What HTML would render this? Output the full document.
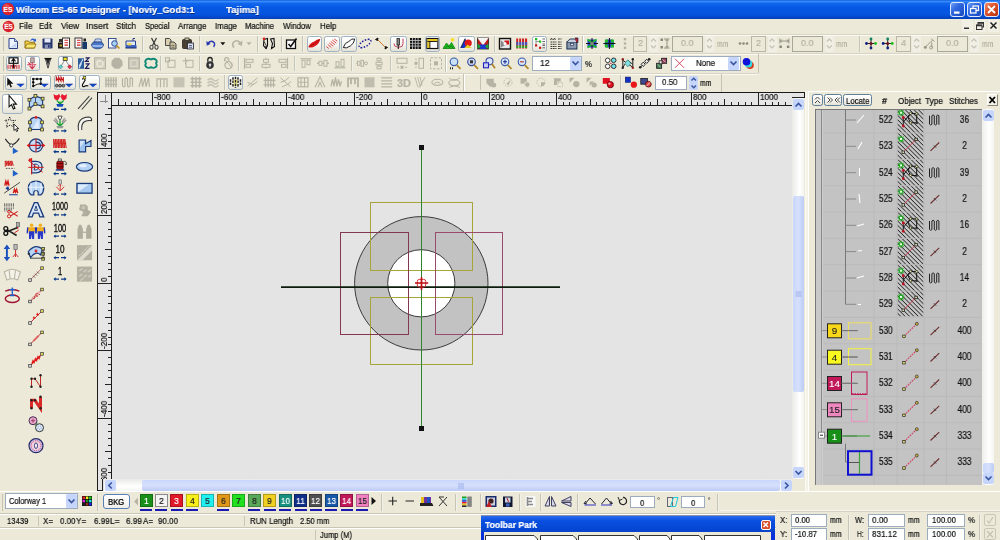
<!DOCTYPE html>
<html><head><meta charset="utf-8"><title>Wilcom ES-65 Designer</title>
<style>
html,body{margin:0;padding:0;background:#ECE9D8;}
#root{position:relative;width:1000px;height:540px;overflow:hidden;background:#ECE9D8;font-family:"Liberation Sans",sans-serif;}
#root div,#root span,#root svg{position:absolute;box-sizing:border-box;}
.t{white-space:pre;line-height:1;letter-spacing:0;will-change:transform;-webkit-text-stroke:0.22px currentColor;}
.btn{border:1px solid #9fb2c4;border-radius:2.5px;background:linear-gradient(#ffffff,#f4f3ee 60%,#e4e2d6);}
.fld{border:1px solid #9dacbc;background:#fff;}
.fldg{border:1px solid #c2c0b2;background:#ECE9D8;}
.sep{width:1px;background:#c5c2b2;border-right:1px solid #fff;width:2px;}
</style></head>
<body><div id="root">
<div class="" style="left:0px;top:0px;width:1000px;height:19px;background:linear-gradient(#0c5ce0 0%,#3a8cf8 7%,#1166ee 18%,#0558e4 40%,#0555df 75%,#0448c8 92%,#033fb4 100%);"></div>
<svg style="left:1px;top:2px" width="14" height="14" viewBox="0 0 14 14"><circle cx="7" cy="7" r="6.2" fill="#d8202a"/><circle cx="5.5" cy="5" r="3" fill="#f06a6a" opacity=".6"/><text x="7" y="9.6" font-size="7" font-weight="bold" text-anchor="middle" fill="#fff" font-family="Liberation Sans,sans-serif">ES</text></svg>
<span class="t" style="left:16px;top:4.9px;font-size:9.9px;color:#fff;letter-spacing:0;font-weight:bold;transform-origin:0 0;transform:scaleX(0.946);text-shadow:0.5px 0.5px 0 #0a2a80;">Wilcom ES-65 Designer - [Noviy_God3:1</span>
<span class="t" style="left:226px;top:4.9px;font-size:9.9px;color:#fff;letter-spacing:0;font-weight:bold;transform-origin:0 0;transform:scaleX(0.973);text-shadow:0.5px 0.5px 0 #0a2a80;">Tajima]</span>
<div class="" style="left:949.5px;top:1.5px;width:15px;height:15px;background:linear-gradient(135deg,#6a9cf4,#2f68e0 40%,#1f52c8 80%,#1a48b8);border:1px solid #dfe9fb;border-radius:3px;"></div>
<div class="" style="left:966.5px;top:1.5px;width:15px;height:15px;background:linear-gradient(135deg,#6a9cf4,#2f68e0 40%,#1f52c8 80%,#1a48b8);border:1px solid #dfe9fb;border-radius:3px;"></div>
<div class="" style="left:983.5px;top:1.5px;width:15px;height:15px;background:linear-gradient(135deg,#f09070,#e0562e 40%,#c43c18 80%,#b03010);border:1px solid #dfe9fb;border-radius:3px;"></div>
<svg style="left:949.5px;top:1.5px" width="50" height="15" viewBox="0 0 50 15"><rect x="4" y="9.500" width="5.500" height="2.200" fill="#fff"/><rect x="23" y="4" width="5.500" height="4.500" fill="none" stroke="#fff" stroke-width="1.200"/><rect x="20.500" y="6.500" width="5.500" height="4.500" fill="#2a62d8" stroke="#fff" stroke-width="1.200"/><path d="M38 4 L45 11 M45 4 L38 11" stroke="#fff" stroke-width="1.800"/></svg>
<div class="" style="left:0px;top:19px;width:1000px;height:15px;background:#ECE9D8;"></div>
<svg style="left:2px;top:20px" width="13" height="13" viewBox="0 0 14 14"><circle cx="7" cy="7" r="6.2" fill="#d8202a"/><circle cx="5.5" cy="5" r="3" fill="#f06a6a" opacity=".6"/><text x="7" y="9.6" font-size="7" font-weight="bold" text-anchor="middle" fill="#fff" font-family="Liberation Sans,sans-serif">ES</text></svg>
<span class="t" style="left:18.5px;top:21.2px;font-size:9.4px;color:#111;letter-spacing:0;transform-origin:0 0;transform:scaleX(0.891);">File</span>
<span class="t" style="left:39px;top:21.2px;font-size:9.4px;color:#111;letter-spacing:0;transform-origin:0 0;transform:scaleX(0.803);">Edit</span>
<span class="t" style="left:61px;top:21.2px;font-size:9.4px;color:#111;letter-spacing:0;transform-origin:0 0;transform:scaleX(0.891);">View</span>
<span class="t" style="left:86px;top:21.2px;font-size:9.4px;color:#111;letter-spacing:0;transform-origin:0 0;transform:scaleX(0.957);">Insert</span>
<span class="t" style="left:116px;top:21.2px;font-size:9.4px;color:#111;letter-spacing:0;transform-origin:0 0;transform:scaleX(0.851);">Stitch</span>
<span class="t" style="left:144.5px;top:21.2px;font-size:9.4px;color:#111;letter-spacing:0;transform-origin:0 0;transform:scaleX(0.795);">Special</span>
<span class="t" style="left:177.5px;top:21.2px;font-size:9.4px;color:#111;letter-spacing:0;transform-origin:0 0;transform:scaleX(0.852);">Arrange</span>
<span class="t" style="left:215px;top:21.2px;font-size:9.4px;color:#111;letter-spacing:0;transform-origin:0 0;transform:scaleX(0.842);">Image</span>
<span class="t" style="left:245px;top:21.2px;font-size:9.4px;color:#111;letter-spacing:0;transform-origin:0 0;transform:scaleX(0.816);">Machine</span>
<span class="t" style="left:283px;top:21.2px;font-size:9.4px;color:#111;letter-spacing:0;transform-origin:0 0;transform:scaleX(0.838);">Window</span>
<span class="t" style="left:319.5px;top:21.2px;font-size:9.4px;color:#111;letter-spacing:0;transform-origin:0 0;transform:scaleX(0.854);">Help</span>
<div class="" style="left:961.5px;top:20px;width:11px;height:12px;background:#f2f0e4;"></div>
<div class="" style="left:974.5px;top:20px;width:11px;height:12px;background:#f2f0e4;"></div>
<div class="" style="left:987.5px;top:20px;width:11px;height:12px;background:#f2f0e4;"></div>
<svg style="left:960px;top:20px" width="40" height="13" viewBox="0 0 40 13"><rect x="4" y="7.500" width="5" height="1.500" fill="#333"/><rect x="18" y="2.500" width="5.500" height="4.500" fill="none" stroke="#333" stroke-width="1"/><path d="M18 3 H23.500" stroke="#333" stroke-width="1.600"/><rect x="16.500" y="5" width="5.500" height="4.500" fill="#f2f0e4" stroke="#333" stroke-width="1"/><path d="M16.500 5.500 H22" stroke="#333" stroke-width="1.600"/><path d="M30.500 2.500 L36.500 8.500 M36.500 2.500 L30.500 8.500" stroke="#222" stroke-width="1.500"/></svg>
<div class="" style="left:0px;top:33.5px;width:1000px;height:1px;background:#d9d5c5;"></div>
<div class="" style="left:0px;top:34.5px;width:1000px;height:1px;background:#faf9f3;"></div>
<div class="" style="left:0px;top:53px;width:1000px;height:1px;background:#d9d5c5;"></div>
<div class="" style="left:0px;top:54px;width:1000px;height:1px;background:#faf9f3;"></div>
<div class="" style="left:0px;top:72.5px;width:758px;height:1px;background:#d9d5c5;"></div>
<div class="" style="left:0px;top:73.5px;width:758px;height:1px;background:#faf9f3;"></div>
<div class="" style="left:0px;top:91px;width:98px;height:1px;background:#d6d2c2;"></div>
<div class="" style="left:445px;top:55px;width:2px;height:17px;background:#c5c2b2;border-right:1px solid #fff;"></div>
<div class="" style="left:758px;top:54px;width:1px;height:19px;background:#c5c2b2;"></div>
<div class="" style="left:463px;top:74px;width:2px;height:17px;background:#c5c2b2;border-right:1px solid #fff;"></div>
<div class="" style="left:721px;top:74px;width:1px;height:18px;background:#c5c2b2;"></div>
<div class="" style="left:582px;top:36px;width:2px;height:16px;background:#c5c2b2;border-right:1px solid #fff;"></div>
<div class="" style="left:3px;top:36px;width:1px;height:15px;background:#c5c2b2;"></div>
<div class="" style="left:3px;top:56px;width:1px;height:15px;background:#c5c2b2;"></div>
<div class="" style="left:3px;top:75px;width:1px;height:15px;background:#c5c2b2;"></div>
<div class="" style="left:480px;top:75px;width:1px;height:15px;background:#c5c2b2;"></div>
<div class="btn" style="left:306.6px;top:36px;width:15.4px;height:16px;"></div>
<div class="btn" style="left:324px;top:36px;width:15.5px;height:16px;"></div>
<div class="btn" style="left:341px;top:36px;width:15.5px;height:16px;"></div>
<div class="btn" style="left:390.3px;top:36px;width:16.3px;height:16px;"></div>
<div class="btn" style="left:424.8px;top:36px;width:15.2px;height:16px;"></div>
<div class="btn" style="left:458px;top:36px;width:16.5px;height:16px;"></div>
<div class="btn" style="left:531.8px;top:36px;width:15.5px;height:16px;"></div>
<div class="btn" style="left:5.5px;top:55.5px;width:16.0px;height:15.5px;"></div>
<div class="btn" style="left:24.5px;top:55.5px;width:15.5px;height:15.5px;"></div>
<div class="btn" style="left:57.5px;top:55.5px;width:15.5px;height:15.5px;"></div>
<div class="btn" style="left:5px;top:74.5px;width:22px;height:15.5px;"></div>
<div class="btn" style="left:29.5px;top:74.5px;width:21.5px;height:15.5px;"></div>
<div class="btn" style="left:54px;top:74.5px;width:21.5px;height:15.5px;"></div>
<div class="btn" style="left:78.5px;top:74.5px;width:21.5px;height:15.5px;"></div>
<div class="btn" style="left:227.7px;top:74.5px;width:15.6px;height:15.5px;"></div>
<span class="t" style="left:396.5px;top:77.5px;font-size:10.5px;color:#b6b3a4;letter-spacing:0;font-weight:bold;transform-origin:0 0;transform:scaleX(1.043);">3D</span>
<div class="" style="left:142px;top:36px;width:2px;height:16px;background:#c8c5b5;border-right:1px solid rgba(255,255,255,.75);"></div>
<div class="" style="left:198.5px;top:36px;width:2px;height:16px;background:#c8c5b5;border-right:1px solid rgba(255,255,255,.75);"></div>
<div class="" style="left:257px;top:36px;width:2px;height:16px;background:#c8c5b5;border-right:1px solid rgba(255,255,255,.75);"></div>
<div class="" style="left:280.5px;top:36px;width:2px;height:16px;background:#c8c5b5;border-right:1px solid rgba(255,255,255,.75);"></div>
<div class="" style="left:302px;top:36px;width:2px;height:16px;background:#c8c5b5;border-right:1px solid rgba(255,255,255,.75);"></div>
<div class="" style="left:494px;top:36px;width:2px;height:16px;background:#c8c5b5;border-right:1px solid rgba(255,255,255,.75);"></div>
<div class="" style="left:859px;top:36px;width:2px;height:16px;background:#c8c5b5;border-right:1px solid rgba(255,255,255,.75);"></div>
<div class="" style="left:160.4px;top:56px;width:2px;height:15px;background:#c8c5b5;border-right:1px solid rgba(255,255,255,.75);"></div>
<div class="" style="left:199px;top:56px;width:2px;height:15px;background:#c8c5b5;border-right:1px solid rgba(255,255,255,.75);"></div>
<div class="" style="left:238px;top:56px;width:2px;height:15px;background:#c8c5b5;border-right:1px solid rgba(255,255,255,.75);"></div>
<div class="" style="left:294px;top:56px;width:2px;height:15px;background:#c8c5b5;border-right:1px solid rgba(255,255,255,.75);"></div>
<div class="" style="left:350.8px;top:56px;width:2px;height:15px;background:#c8c5b5;border-right:1px solid rgba(255,255,255,.75);"></div>
<div class="" style="left:390px;top:56px;width:2px;height:15px;background:#c8c5b5;border-right:1px solid rgba(255,255,255,.75);"></div>
<div class="" style="left:600px;top:56px;width:2px;height:15px;background:#c8c5b5;border-right:1px solid rgba(255,255,255,.75);"></div>
<div class="" style="left:224px;top:75px;width:2px;height:15px;background:#c8c5b5;border-right:1px solid rgba(255,255,255,.75);"></div>
<div class="" style="left:620px;top:75px;width:2px;height:15px;background:#c8c5b5;border-right:1px solid rgba(255,255,255,.75);"></div>
<div class="" style="left:633px;top:36px;width:14px;height:15.5px;border:1px solid #b9b6a6;background:#ECE9D8;"></div>
<div class="" style="left:751.3px;top:36px;width:14.5px;height:15.5px;border:1px solid #b9b6a6;background:#ECE9D8;"></div>
<div class="" style="left:896px;top:36px;width:14.7px;height:15.5px;border:1px solid #b9b6a6;background:#ECE9D8;"></div>
<div class="" style="left:672px;top:36px;width:30.6px;height:15.5px;border:1px solid #a9a798;background:#ECE9D8;"></div>
<div class="" style="left:792.2px;top:36px;width:30.6px;height:15.5px;border:1px solid #a9a798;background:#ECE9D8;"></div>
<div class="" style="left:937px;top:36px;width:30.8px;height:15.5px;border:1px solid #a9a798;background:#ECE9D8;"></div>
<div class="" style="left:649.0px;top:36px;width:9px;height:15.5px;background:#f1efe5;border-radius:1px;"></div>
<div class="" style="left:705.0px;top:36px;width:9px;height:15.5px;background:#f1efe5;border-radius:1px;"></div>
<div class="" style="left:767.5px;top:36px;width:9px;height:15.5px;background:#f1efe5;border-radius:1px;"></div>
<div class="" style="left:824.8px;top:36px;width:9px;height:15.5px;background:#f1efe5;border-radius:1px;"></div>
<div class="" style="left:912.2px;top:36px;width:9px;height:15.5px;background:#f1efe5;border-radius:1px;"></div>
<div class="" style="left:969.5px;top:36px;width:9px;height:15.5px;background:#f1efe5;border-radius:1px;"></div>
<span class="t" style="left:637.5px;top:38px;font-size:9.8px;color:#b4b1a2;letter-spacing:0;transform-origin:0 0;transform:scaleX(0.917);">2</span>
<span class="t" style="left:756.0px;top:38px;font-size:9.8px;color:#b4b1a2;letter-spacing:0;transform-origin:0 0;transform:scaleX(0.917);">2</span>
<span class="t" style="left:900.8px;top:38px;font-size:9.8px;color:#b4b1a2;letter-spacing:0;transform-origin:0 0;transform:scaleX(0.917);">4</span>
<span class="t" style="left:681.0px;top:38px;font-size:9.8px;color:#b4b1a2;letter-spacing:0;transform-origin:0 0;transform:scaleX(0.918);">0.0</span>
<span class="t" style="left:801.2px;top:38px;font-size:9.8px;color:#b4b1a2;letter-spacing:0;transform-origin:0 0;transform:scaleX(0.918);">0.0</span>
<span class="t" style="left:946.1px;top:38px;font-size:9.8px;color:#b4b1a2;letter-spacing:0;transform-origin:0 0;transform:scaleX(0.918);">0.0</span>
<span class="t" style="left:717px;top:39.2px;font-size:9.4px;color:#b4b1a2;letter-spacing:0;transform-origin:0 0;transform:scaleX(0.722);">mm</span>
<span class="t" style="left:836.4px;top:39.2px;font-size:9.4px;color:#b4b1a2;letter-spacing:0;transform-origin:0 0;transform:scaleX(0.722);">mm</span>
<span class="t" style="left:981.6px;top:39.2px;font-size:9.4px;color:#b4b1a2;letter-spacing:0;transform-origin:0 0;transform:scaleX(0.722);">mm</span>
<div class="fld" style="left:532px;top:56px;width:50px;height:14.5px;"></div>
<div class="" style="left:570px;top:57px;width:11px;height:12.5px;background:#c6d5fb;border-radius:1.5px;"></div>
<span class="t" style="left:540.2px;top:57.6px;font-size:9.8px;color:#111;letter-spacing:0;transform-origin:0 0;transform:scaleX(0.872);">12</span>
<span class="t" style="left:584.5px;top:58.5px;font-size:9.4px;color:#111;letter-spacing:0;transform-origin:0 0;transform:scaleX(0.837);">%</span>
<div class="fld" style="left:670.5px;top:56px;width:70px;height:14.5px;"></div>
<div class="" style="left:728px;top:57px;width:11px;height:12.5px;background:#c6d5fb;border-radius:1.5px;"></div>
<span class="t" style="left:696px;top:57.9px;font-size:9.8px;color:#111;letter-spacing:0;transform-origin:0 0;transform:scaleX(0.811);">None</span>
<svg style="left:0;top:0" width="1000" height="540" viewBox="0 0 1000 540" fill="none" stroke="#3a55a0" stroke-width="1.700"><path d="M572.500 61.500 L575.500 64.500 L578.500 61.500"/><path d="M730.500 61.500 L733.500 64.500 L736.500 61.500"/></svg>
<div class="fld" style="left:654.5px;top:75.5px;width:32.5px;height:14.5px;"></div>
<span class="t" style="left:661.6px;top:76.7px;font-size:9.8px;color:#111;letter-spacing:0;transform-origin:0 0;transform:scaleX(0.813);">0.50</span>
<div class="" style="left:688.5px;top:76px;width:9.5px;height:6.5px;background:#c6d5fb;border-radius:1.5px;"></div>
<div class="" style="left:688.5px;top:83px;width:9.5px;height:6.5px;background:#c6d5fb;border-radius:1.5px;"></div>
<svg style="left:688.5px;top:76px" width="9.5" height="14" viewBox="0 0 9.5 14" fill="none" stroke="#3a55a0" stroke-width="1.400"><path d="M2.500 4.500 L4.750 2.200 L7 4.500 M2.500 9.500 L4.750 11.800 L7 9.500"/></svg>
<span class="t" style="left:700px;top:77.8px;font-size:9.4px;color:#111;letter-spacing:0;transform-origin:0 0;transform:scaleX(0.734);">mm</span>
<svg style="left:0;top:0" width="1000" height="540" viewBox="0 0 1000 540" fill="none"><g transform="translate(13 43.5)"><path d="M-4 -5 H1.5 L4.5 -2 V5 H-4 Z" fill="#eef4ff" stroke="#2a3f8a" stroke-width="1"/><path d="M1.5 -5 V-2 H4.5" fill="#b8c8ee" stroke="#2a3f8a" stroke-width=".8"/><path d="M-3 4 L3.5 -1 V4Z" fill="#c4d4f4"/></g><g transform="translate(30.5 43.5)"><path d="M-5.5 -2.5 H-2 L-1 -1.2 H4 V4.5 H-5.5Z" fill="#f0d040" stroke="#8a6a10" stroke-width=".9"/><path d="M-5.5 4.5 L-3.5 0.5 H5.5 L4 4.5Z" fill="#fbe870" stroke="#8a6a10" stroke-width=".8"/><path d="M0 -3.5 q2.5 -2.5 4.5 -0.5 l1 -1 v3 h-3 l1 -1 q-1.5 -1.300 -3.500 0.500z" fill="#2a5ad0"/></g><g transform="translate(47.5 43.5)"><rect x="-5" y="-5" width="10" height="10" rx=".8" fill="#26346e"/><rect x="-3" y="-5" width="6" height="4" fill="#e8ecf8"/><rect x="-2.8" y="1" width="5.6" height="4" fill="#8a96b8"/><rect x="0.500" y="1.6" width="1.6" height="2.6" fill="#26346e"/></g><g transform="translate(64 43.5)"><rect x="-6" y="-1" width="6" height="6" fill="#1a1a1a"/><rect x="-5" y="-4.500" width="3" height="3" fill="#333"/><rect x="-1.500" y="-5.500" width="7" height="10" fill="#fff" stroke="#222" stroke-width=".9"/><path d="M0.500 -3.200 H4 M0.500 -0.800 H4 M0.500 1.600 H4" stroke="#d02020" stroke-width="1.100"/><rect x="-4.500" y="1" width="2.500" height="2" fill="#c8a030"/></g><g transform="translate(81 43.5)"><rect x="-6" y="-5.500" width="7" height="10" fill="#fff" stroke="#222" stroke-width=".9"/><path d="M-4 -3.200 H-0.500 M-4 -0.800 H-0.500 M-4 1.600 H-0.500" stroke="#d02020" stroke-width="1.100"/><rect x="1.500" y="-1.500" width="4.500" height="7" fill="#1a3a6a"/><rect x="2.500" y="-5" width="2.500" height="3" fill="#222"/></g><g transform="translate(97.5 43.5)"><ellipse cx="0" cy="1.500" rx="6" ry="3.800" fill="#4a78c8"/><path d="M-3.500 -1 L-2 -4.500 H3.500 L4 -1Z" fill="#e8f0ff" stroke="#2a4a9a" stroke-width=".8"/><path d="M-5.500 2.500 H5.500" stroke="#cfe0ff" stroke-width="1.200"/><ellipse cx="0" cy="1.500" rx="6" ry="3.800" fill="none" stroke="#24407e" stroke-width=".8"/></g><g transform="translate(114 43.5)"><rect x="-5.500" y="-5" width="7.500" height="9.500" fill="#f4f8ff" stroke="#2a3f8a" stroke-width=".9"/><circle cx="0.500" cy="0" r="2.800" fill="#a8d0f0" stroke="#2a4a9a" stroke-width="1"/><path d="M2.500 2.200 L5.500 5" stroke="#c09020" stroke-width="1.600"/></g><g transform="translate(131 43.5)"><path d="M-5.500 4.500 H5.500 V1.500 H-5.500Z" fill="#3a60c0"/><path d="M-5 1.500 V-2.500 H4.500 V1.500" fill="#dfe8fa" stroke="#2a3f8a" stroke-width="1"/><ellipse cx="-1.500" cy="0.800" rx="2.500" ry="1.200" fill="#f0d850"/><path d="M2 -2.500 V-5 H4" stroke="#2a3f8a" stroke-width="1" fill="none"/><path d="M-5.500 4.500 H5.500" stroke="#1a2a6a" stroke-width="1"/></g><g transform="translate(154 43.5)"><path d="M-2.500 -5.500 L1.500 2 M2.500 -5.500 L-1.500 2" stroke="#333" stroke-width="1.200"/><ellipse cx="-2.500" cy="3.800" rx="1.600" ry="2" fill="none" stroke="#444" stroke-width="1.100"/><ellipse cx="2.500" cy="3.800" rx="1.600" ry="2" fill="none" stroke="#444" stroke-width="1.100"/></g><g transform="translate(171 43.5)"><path d="M-5.500 -5 H-1.500 L0 -3.500 V2 H-5.500Z" fill="#d8cfae" stroke="#3a3a3a" stroke-width=".9"/><path d="M-1 -1.500 H3 L5 0.500 V5.500 H-1Z" fill="#c8be9c" stroke="#3a3a3a" stroke-width=".9"/><path d="M0.500 2 H3.500 M0.500 3.800 H3.500" stroke="#555" stroke-width=".7"/></g><g transform="translate(188 43.5)"><rect x="-5.500" y="-4" width="9" height="9" rx="1" fill="#4a4030" stroke="#222" stroke-width=".8"/><rect x="-3" y="-5.500" width="4" height="2.500" fill="#c8c0a0" stroke="#222" stroke-width=".7"/><rect x="-0.500" y="-0.500" width="6" height="6" fill="#d8e0f0" stroke="#223" stroke-width=".8"/><path d="M1 2 H4 M1 3.800 H4" stroke="#335" stroke-width=".7"/></g><g transform="translate(211 43.5)"><g transform="scale(.85)"><path d="M-3.500 -0.500 Q1 -5 4 -0.500 Q5 2 3 4" fill="none" stroke="#2a3ab0" stroke-width="1.800"/><path d="M-5.500 -3 L-5 2.500 L-0.500 0.500Z" fill="#2a3ab0"/></g></g><g transform="translate(222.8 43.5)"><path d="M-2.500 -1.200 H2.500 L0 1.800Z" fill="#111"/></g><g transform="translate(237 43.5)"><path d="M3.500 -0.500 Q-1 -5 -4 -0.500 Q-5 2 -3 4" fill="none" stroke="#b6b3a4" stroke-width="1.600"/><path d="M5.500 -3 L5 2.500 L0.500 0.500Z" fill="#b6b3a4"/></g><g transform="translate(249 43.5)"><path d="M-2.500 -1.200 H2.500 L0 1.800Z" fill="#b6b3a4"/></g><g transform="translate(269 43.5)"><path d="M-5 -4 L-1.500 -5 L-1.500 2 L-3 5 L-5.500 2Z M1.500 -4.500 L5 -5 L5.500 3 L2.500 5 L3.500 0Z" fill="none" stroke="#111" stroke-width="1.100"/><path d="M-5 -2 L-2 3.500 L-3.500 3 L-2.500 5.500" fill="#fff" stroke="#111" stroke-width=".8"/><circle cx="-5" cy="-4.800" r="1.300" fill="#e02020"/></g><g transform="translate(291.5 43.5)"><rect x="-5" y="-3.500" width="9" height="8.500" fill="#fff" stroke="#111" stroke-width="1.300"/><path d="M-3 0.500 L-0.800 3 L5 -5" fill="none" stroke="#111" stroke-width="1.600"/></g><g transform="translate(314.3 43.5)"><path d="M-6 3.500 Q-4 -1 0 -2 Q3 -5 6 -4.500 Q5 0.500 1 2.500 Q-3 5 -6 3.500Z" fill="#e01818"/><path d="M-5 3 Q0 1 5.500 -4" stroke="#a00808" stroke-width=".8" fill="none"/></g><g transform="translate(331.8 43.5)"><path d="M-5.500 3 l2.500 2 M-4 1 l3.500 3 M-2.500 -0.500 l4 3.200 M-1 -2 l4 3.200 M0.500 -3.500 l4 3.200 M2.500 -4.500 l3 2.200" stroke="#d84848" stroke-width="1"/></g><g transform="translate(348.8 43.5)"><path d="M-5.500 4 Q-4 -1 0 -2 Q3 -5.500 6 -4.500 Q5 0.500 1.500 2.500 Q-3 5.500 -5.500 4Z" fill="#fff" stroke="#222" stroke-width="1"/></g><g transform="translate(365 43.5)"><ellipse cx="0" cy="0" rx="6.500" ry="3" transform="rotate(-30)" fill="none" stroke="#1a1aa0" stroke-width="1.500" stroke-dasharray="1.500 1.500"/></g><g transform="translate(381.5 43.5)"><path d="M-4.500 -4.500 L4.500 4.500" stroke="#c87830" stroke-width="1"/><path d="M-6 -4 L-3.500 -5.500 L-4 -3Z M6 4 L3.500 5.500 L4 3Z" fill="#111" stroke="#111" stroke-width="1"/></g><g transform="translate(398.5 43.5)"><path d="M-4.500 0 Q-4.500 3.500 -1 3.500 H1.500 Q4.500 3.500 4.500 0 V-5" fill="none" stroke="#c03050" stroke-width=".9"/><rect x="-1.500" y="-5" width="2.500" height="6.500" fill="#888" stroke="#222" stroke-width=".8"/><path d="M-0.200 1.500 V5.500" stroke="#222" stroke-width="1.100"/></g><g transform="translate(415.5 43.5)"><rect x="-5.500" y="-5.500" width="11" height="11" fill="#111"/><path d="M-3 -5.500 V5.500 M-0.200 -5.500 V5.500 M2.600 -5.500 V5.500 M-5.500 -3 H5.500 M-5.500 -0.200 H5.500 M-5.500 2.600 H5.500" stroke="#b8b8b8" stroke-width=".9"/></g><g transform="translate(432.4 43.5)"><rect x="-5.500" y="-5" width="11" height="10" fill="#fff" stroke="#111" stroke-width="1.200"/><rect x="-5" y="-4.500" width="10" height="2.500" fill="#e8c820"/><rect x="-5" y="-2" width="2.500" height="6.500" fill="#e8c820"/><path d="M-2.500 -2 V4.500 M-5 -2 H5" stroke="#111" stroke-width=".9"/></g><g transform="translate(449 43.5)"><path d="M-6 5 L-2.500 -0.500 L0 2.500 L2.500 -1 L6 5Z" fill="#20c020" stroke="#108010" stroke-width=".8"/><path d="M-4 5 L-1.500 2 L0.500 4 L2.500 2 L4 5" fill="none" stroke="#0a700a" stroke-width=".8"/><circle cx="3.500" cy="-3.800" r="1.800" fill="#f8e020"/></g><g transform="translate(466.2 43.5)"><path d="M-5.500 4.500 L-1 -5 L3 4.500Z" fill="#1030d0"/><circle cx="2" cy="-0.500" r="3.600" fill="#e01818"/><path d="M-2 4.500 L1.500 1 L5.500 4.500Z" fill="#e8d020"/><path d="M-5.500 4.500 L-1 -5" stroke="#111" stroke-width=".8"/></g><g transform="translate(483 43.5)"><rect x="-5.500" y="-5.500" width="11" height="11" fill="#c01818" stroke="#222" stroke-width=".8"/><path d="M-5.500 -5.500 L0 2 L5.500 -5.500" fill="#f4f4f4"/><rect x="-3.500" y="1" width="7" height="4.500" fill="#1838d0"/><path d="M-5.500 0 L-2 3 L-5.500 5.500Z M5.500 0 L2 3 L5.500 5.500Z" fill="#18a838"/></g><g transform="translate(505 43.5)"><rect x="-5.500" y="-5" width="11" height="10.500" fill="#e8e8e8" stroke="#111" stroke-width="1.400"/><path d="M-4 -3 L1 1 L-4 4Z" fill="#888"/><rect x="-0.500" y="-3" width="4.500" height="4" fill="#d01818"/><circle cx="0" cy="0" r="1.500" fill="#fff"/></g><g transform="translate(521.7 43.5)"><g><rect x="-5.500" y="-5" width="2.200" height="10" fill="#d02020"/><rect x="-2.600" y="-5" width="2.200" height="10" fill="#d02020"/><rect x="0.300" y="-5" width="2.200" height="10" fill="#d02020"/><rect x="3.200" y="-5" width="2.200" height="10" fill="#d02020"/><rect x="-5.500" y="-1.500" width="11" height="3" fill="#3858d0" opacity=".85"/><rect x="-5.500" y="2" width="11" height="2.500" fill="#20b030" opacity=".85"/><path d="M-3 -5 V5 M-0.100 -5 V5 M2.800 -5 V5" stroke="#ECE9D8" stroke-width=".7"/></g></g><g transform="translate(539.5 43.5)"><rect x="-4.500" y="-5.500" width="2.200" height="2.200" fill="#18c018"/><rect x="-0.500" y="-3" width="2.200" height="2.200" fill="#18c018"/><rect x="-4.500" y="0.800" width="2.200" height="2.200" fill="#d01818"/><rect x="-0.500" y="3.200" width="2.200" height="2.200" fill="#d01818"/><path d="M3 -4.500 H5.500 M3 -2 H5.500 M3 0.500 H5.500 M3 2 H5.500 M3 4.300 H5.500" stroke="#555" stroke-width=".9"/><path d="M-3.500 -3 V1 M-3.400 -2 H-0.500" stroke="#555" stroke-width=".6"/></g><g transform="translate(556 43.5)"><path d="M-5.500 -3.500 l1 -2 l1 2 M-2.500 -3.500 l1 -2 l1 2 M-5.500 -1.500 H0.500 M-5.500 0.800 H0.500 M-5.500 3 H0.500 M-5.500 5 H0.500 M2 -4.500 H5.500 M2 -1.500 H5.500 M2 0.800 H5.500 M2 3 H5.500 M2 5 H5.500" stroke="#222" stroke-width=".9" fill="none" stroke-dasharray="1.800 .600"/></g><g transform="translate(572.4 43.5)"><rect x="-5.500" y="-1.500" width="10" height="7" fill="#8a98b0" stroke="#1a2a4a" stroke-width="1"/><path d="M-5.500 -1.500 L-2.500 -4.500 H3 L4.500 -1.500" fill="#c8d0e0" stroke="#1a2a4a" stroke-width=".9"/><rect x="-2" y="0" width="3" height="2" fill="#e8e8f0" stroke="#1a2a4a" stroke-width=".6"/><path d="M2.500 -5.500 H5.500 V-1 H4" fill="#c02020" stroke="#1a1a4a" stroke-width=".8"/></g><g transform="translate(592 43.5)"><rect x="-4.500" y="-4" width="9" height="8" fill="#2040c8"/><path d="M-4.500 -4 L0 -1 L4.500 -4 M-4.500 4 L0 1 L4.500 4" stroke="#20c020" stroke-width="1.600" fill="none"/><path d="M0 -5.500 V5.500 M-6 0 H6" stroke="#111" stroke-width="1"/><circle cx="0" cy="0" r="1.700" fill="#888"/></g><g transform="translate(609.4 43.5)"><rect x="-4.500" y="-4" width="9" height="8" rx="2" fill="#2040c8"/><rect x="-4.500" y="-4" width="3" height="3" fill="#20c020"/><rect x="1.500" y="1" width="3" height="3" fill="#20c020"/><rect x="1.500" y="-4" width="3" height="3" fill="#20c020"/><rect x="-4.500" y="1" width="3" height="3" fill="#20c020"/><path d="M0 -5.500 V5.500 M-6 0 H6" stroke="#111" stroke-width="1"/></g><g transform="translate(625 43.5)"><rect x="-1.200" y="-5.500" width="2.400" height="2.400" fill="#b6b3a4"/><rect x="-1.200" y="-1.200" width="2.400" height="2.400" fill="#b6b3a4"/><rect x="-1.200" y="3.100" width="2.400" height="2.400" fill="#b6b3a4"/></g><g transform="translate(653.5 43.5)"><path d="M-2.500 -2 L0 -4.500 L2.500 -2 M-2.500 2 L0 4.500 L2.500 2" fill="none" stroke="#c4c1b2" stroke-width="1.100"/></g><g transform="translate(665 43.5)"><rect x="-4.500" y="-5" width="2.500" height="2.500" fill="#8a887a"/><rect x="-4.500" y="2.500" width="2.500" height="2.500" fill="#8a887a"/><path d="M-1 -4.500 H4.500 M-1 4.500 H4.500 M2 -4 V4 M0.500 -2.500 L2 -4 L3.500 -2.500 M0.500 2.500 L2 4 L3.500 2.500" stroke="#8a887a" stroke-width=".9" fill="none"/></g><g transform="translate(709.5 43.5)"><path d="M-2.500 -2 L0 -4.500 L2.500 -2 M-2.500 2 L0 4.500 L2.500 2" fill="none" stroke="#c4c1b2" stroke-width="1.100"/></g><g transform="translate(743.5 43.5)"><circle cx="-3.500" cy="0" r="1.300" fill="#8a887a"/><circle cx="0" cy="0" r="1.300" fill="#8a887a"/><circle cx="3.500" cy="0" r="1.300" fill="#8a887a"/></g><g transform="translate(772 43.5)"><path d="M-2.500 -2 L0 -4.500 L2.500 -2 M-2.500 2 L0 4.500 L2.500 2" fill="none" stroke="#c4c1b2" stroke-width="1.100"/></g><g transform="translate(784.4 43.5)"><rect x="-5" y="2" width="2.500" height="2.500" fill="#8a887a"/><rect x="2.500" y="2" width="2.500" height="2.500" fill="#8a887a"/><path d="M-4.500 -5 V0 M4.500 -5 V0 M-4 -2.500 H4 M-2.500 -4 L-4 -2.500 L-2.500 -1 M2.500 -4 L4 -2.500 L2.500 -1" stroke="#8a887a" stroke-width=".9" fill="none"/></g><g transform="translate(829.3 43.5)"><path d="M-2.500 -2 L0 -4.500 L2.500 -2 M-2.500 2 L0 4.500 L2.500 2" fill="none" stroke="#c4c1b2" stroke-width="1.100"/></g><g transform="translate(871 43.5)"><path d="M-5.500 0 H5.500 M0 -5.500 V5.500" stroke="#111" stroke-width=".9"/><circle cx="-4.500" cy="0" r="1.400" fill="#102080"/><circle cx="4.500" cy="0" r="1.400" fill="#20c020"/><circle cx="0" cy="-4.500" r="1.400" fill="#108060"/><circle cx="0" cy="4.500" r="1.400" fill="#102080"/><circle cx="0" cy="0" r="1.500" fill="#701020"/></g><g transform="translate(887.7 43.5)"><path d="M-5.500 0 H5.500 M0 -5.500 V5.500" stroke="#111" stroke-width=".9"/><circle cx="-4.500" cy="0" r="1.400" fill="#102080"/><circle cx="4.500" cy="0" r="1.400" fill="#20c020"/><circle cx="0" cy="-4.500" r="1.400" fill="#108060"/><circle cx="0" cy="4.500" r="1.400" fill="#102080"/><circle cx="0" cy="0" r="1.500" fill="#701020"/></g><g transform="translate(916.7 43.5)"><path d="M-2.500 -2 L0 -4.500 L2.500 -2 M-2.500 2 L0 4.500 L2.500 2" fill="none" stroke="#c4c1b2" stroke-width="1.100"/></g><g transform="translate(929.3 43.5)"><path d="M-4.500 4 L3.500 -3.500 M2 -5 L5 -2 M2.500 -1 V4" stroke="#9a9888" stroke-width="1" fill="none"/><circle cx="-4" cy="3.800" r="1.500" fill="#9a9888"/><circle cx="1.800" cy="4" r="1.500" fill="none" stroke="#9a9888" stroke-width=".9"/></g><g transform="translate(974 43.5)"><path d="M-2.500 -2 L0 -4.500 L2.500 -2 M-2.500 2 L0 4.500 L2.500 2" fill="none" stroke="#c4c1b2" stroke-width="1.100"/></g><g transform="translate(13.5 63.3)"><rect x="-4.500" y="-5.500" width="9" height="5.500" fill="#fff" stroke="#111" stroke-width="1.200"/><path d="M0 -4 V4 M-2 -2 L0 -4.500 L2 -2 M-2 2 L0 4.500 L2 2" stroke="#111" stroke-width="1.200" fill="none"/><path d="M-5.500 1.500 V5.500 M-3.300 1.500 V5.500 M-1.100 1.500 V5.500 M1.100 1.500 V5.500 M3.300 1.500 V5.500 M5.500 1.500 V5.500" stroke="#d02030" stroke-width="1"/></g><g transform="translate(32.2 63.3)"><rect x="-1.500" y="-5.500" width="3.500" height="5" fill="#b8b0b0" stroke="#806060" stroke-width=".7"/><path d="M0 -1 V5 M-2.500 2.500 L0 5.500 L2.500 2.500 M-4 -1 L-1 1.500 M-5 1.500 H-1 M4 1.500 H1" stroke="#d03050" stroke-width="1.100" fill="none"/></g><g transform="translate(48 63.3)"><path d="M-3 -4.500 H3 L0.500 5 H-0.500Z" fill="#222"/><path d="M-1.800 -3 L0 3 L1.800 -3" stroke="#999" stroke-width=".7" fill="none"/><path d="M-3.500 -4.800 H3.500" stroke="#111" stroke-width="1.200"/></g><g transform="translate(65.2 63.3)"><path d="M0 -4 L-4.500 3.500 M0 -4 L4.500 3.500" stroke="#777" stroke-width=".8"/><rect x="-2" y="-6" width="4" height="3.200" fill="#e8e020" stroke="#333" stroke-width=".8"/><path d="M-4.500 1.500 L-2.500 3.500 L-4.500 5.500 L-6.500 3.500Z" fill="#60d0d0" stroke="#208080" stroke-width=".6"/><path d="M4.500 1.500 L6.500 3.500 L4.500 5.500 L2.500 3.500Z" fill="#e03050" stroke="#901020" stroke-width=".6"/></g><g transform="translate(84 63.3)"><rect x="-6" y="-5" width="6" height="10.500" fill="#2a5a98"/><path d="M-5 3 L-1 -4 M-5 5 L-2.500 0" stroke="#c8e0f8" stroke-width="1.200"/><path d="M1.500 -5.500 H5 L1.500 -2 H5 M1.500 0.500 H5 L1.500 5 H5.500" stroke="#1a1a60" stroke-width="1.200" fill="none"/></g><g transform="translate(100 63.3)"><rect x="-5.500" y="-5.500" width="11" height="11" fill="#d4d1c2" stroke="#b6b3a4" stroke-width="1"/><circle cx="0" cy="0.500" r="3" fill="none" stroke="#ECE9D8" stroke-width="1.400"/><path d="M5.500 -5.500 L2 -2" stroke="#b6b3a4"/></g><g transform="translate(117 63.3)"><path d="M-2.300 -5.500 H2.300 L5.500 -2.300 V2.300 L2.300 5.500 H-2.300 L-5.500 2.300 V-2.300Z" fill="#b6b3a4"/></g><g transform="translate(134 63.3)"><rect x="-5.500" y="-5.500" width="11" height="11" fill="#c8c5b6" stroke="#b6b3a4" stroke-width="1"/><rect x="-3" y="-3" width="6" height="6" fill="none" stroke="#dedbcc" stroke-width="1.200"/></g><g transform="translate(151 63.3)"><path d="M-5 -3.500 Q-2.500 -5.500 0 -3.800 Q2.500 -5.500 5 -3.500 Q6.500 -2 5 0 Q6.500 2 5 3.500 Q2.500 5.500 0 3.800 Q-2.500 5.500 -5 3.500 Q-6.500 2 -5 0 Q-6.500 -2 -5 -3.500Z" fill="none" stroke="#108878" stroke-width="1.800" stroke-linejoin="round"/></g><g transform="translate(171 63.3)"><rect x="-3" y="-3" width="7" height="7" fill="none" stroke="#b6b3a4" stroke-width="1"/><rect x="-5.500" y="-5.500" width="4" height="4" fill="none" stroke="#b6b3a4" stroke-width="1"/><path d="M5 -5 v0.100 M-5 5 v0.100 M5 5 v0.100" stroke="#b6b3a4" stroke-width="1.500"/></g><g transform="translate(188 63.3)"><rect x="-2" y="-3" width="7" height="7" fill="none" stroke="#b6b3a4" stroke-width="1"/><path d="M-5.500 -2.500 H1 M-2.500 -5.500 V1" stroke="#b6b3a4" stroke-width="1"/></g><g transform="translate(210 63.3)"><path d="M-2.200 -1.500 V-3.500 Q-2.200 -5.800 0 -5.800 Q2.200 -5.800 2.200 -3.500 V-1.500" fill="none" stroke="#222" stroke-width="1.300"/><circle cx="0" cy="1.800" r="3.800" fill="#333"/><circle cx="0" cy="1.500" r="1.300" fill="#ddd"/><path d="M0 2 V4" stroke="#ddd" stroke-width="1"/></g><g transform="translate(228 63.3)"><path d="M-3.500 -2 V-3.500 Q-3.500 -5.800 -1.300 -5.800 Q1 -5.800 1 -3.500" fill="none" stroke="#b6b3a4" stroke-width="1.200"/><circle cx="0.500" cy="1.800" r="3.600" fill="none" stroke="#b6b3a4" stroke-width="1.200"/><path d="M-3 -4 L4 5 M-1 -5 L5 3" stroke="#b6b3a4" stroke-width=".9"/></g><g transform="translate(455 63.3)"><circle cx="-1" cy="-1.500" r="3.800" fill="#c8e0f8" stroke="#3a5aa8" stroke-width="1.100"/><path d="M1.800 1.800 L5.500 5.500" stroke="#b08828" stroke-width="1.800"/><path d="M-4.500 4 V6 M-2.500 4 V6" stroke="#111" stroke-width=".9"/></g><g transform="translate(472.5 63.3)"><circle cx="-1" cy="-1.500" r="3.800" fill="#c8d8f0" stroke="#3a4a98" stroke-width="1.100"/><rect x="-2.500" y="-3" width="3" height="3" fill="#333"/><path d="M1.800 1.800 L5.500 5.500" stroke="#b08828" stroke-width="1.800"/></g><g transform="translate(489 63.3)"><circle cx="0.500" cy="-2" r="3.500" fill="#d8e4f8" stroke="#3a4a98" stroke-width="1.100"/><rect x="-5.500" y="-0.500" width="5" height="5" fill="#c8d0f0" stroke="#2020c0" stroke-width="1.100"/><path d="M3 0.800 L6 5" stroke="#b08828" stroke-width="1.800"/></g><g transform="translate(506 63.3)"><circle cx="-1" cy="-1.500" r="3.800" fill="#d8e8fa" stroke="#3a5aa8" stroke-width="1.100"/><path d="M-3 -1.500 H1 M-1 -3.500 V0.500" stroke="#1a2a90" stroke-width="1.100"/><path d="M1.800 1.800 L5.500 5.500" stroke="#b08828" stroke-width="1.800"/></g><g transform="translate(523 63.3)"><circle cx="-1" cy="-1.500" r="3.800" fill="#d8e8fa" stroke="#3a5aa8" stroke-width="1.100"/><path d="M-3 -1.500 H1" stroke="#b03030" stroke-width="1.100"/><path d="M1.800 1.800 L5.500 5.500" stroke="#b08828" stroke-width="1.800"/></g><g transform="translate(610.7 63.3)"><circle cx="-3" cy="-3" r="2.300" fill="#fff" stroke="#222" stroke-width=".9"/><circle cx="-3" cy="3" r="2.300" fill="#fff" stroke="#222" stroke-width=".9"/><circle cx="3" cy="-3" r="2.300" fill="#70e0e8" stroke="#222" stroke-width=".9"/><circle cx="3" cy="3" r="2.300" fill="#70e0e8" stroke="#222" stroke-width=".9"/><path d="M-1 0 H1" stroke="#c03060" stroke-width="1"/></g><g transform="translate(627.8 63.3)"><path d="M-5 -4 V4.500 M5 -4 V4.500 M-5 -3 L5 4 M-5 4 L0 -3 L5 1" stroke="#222" stroke-width="1" fill="none"/><path d="M0 -3.500 L3 0 L0 3.500 L-3 0Z" fill="#80e0e0" stroke="#208080" stroke-width=".6"/><circle cx="-5" cy="-4" r="1.200" fill="#902020"/><circle cx="5" cy="-4" r="1.200" fill="#222"/><circle cx="-5" cy="4.500" r="1.200" fill="#222"/><circle cx="5" cy="4.500" r="1.200" fill="#902020"/></g><g transform="translate(644.7 63.3)"><path d="M-4.500 4 L4.500 -4" stroke="#222" stroke-width="1"/><rect x="-3" y="-0.500" width="3" height="3" fill="#e8e8e8" stroke="#222" stroke-width=".9" transform="rotate(-45 -1.500 1)"/><rect x="0.500" y="-3.500" width="3" height="3" fill="#e8e8e8" stroke="#222" stroke-width=".9" transform="rotate(-45 2 -2)"/><circle cx="-4.500" cy="4" r="1.300" fill="#222"/><circle cx="4.500" cy="-4" r="1.300" fill="#222"/></g><g transform="translate(661.6 63.3)"><rect x="-5" y="0" width="5" height="5" fill="#408050" stroke="#222" stroke-width=".9"/><rect x="0" y="-5" width="5" height="5" fill="#a04060" stroke="#222" stroke-width=".9"/><path d="M-4 1 L-1 4 M1 -4 L4 -1" stroke="#ddd" stroke-width=".8"/><rect x="-2.500" y="-2.500" width="3" height="3" fill="#ddd" stroke="#222" stroke-width=".7"/></g><g transform="translate(679.5 63.3)"><path d="M-4.500 -4.500 L4.500 4.500 M4.500 -4.500 L-4.500 4.500" stroke="#c83858" stroke-width=".9"/></g><g transform="translate(748 63.3)"><circle cx="2" cy="2" r="3.800" fill="#e03818"/><circle cx="0.500" cy="0.500" r="3.800" fill="#30d8e0"/><circle cx="-1.500" cy="-1.500" r="3.800" fill="#1010d8"/></g><g transform="translate(249 63.3)"><path d="M-4.500 -5.500 V5.500" stroke="#b6b3a4" stroke-width="1.200"/><rect x="-3" y="-4" width="7" height="3" fill="none" stroke="#b6b3a4"/><rect x="-3" y="1" width="4.500" height="3" fill="none" stroke="#b6b3a4"/></g><g transform="translate(266 63.3)"><path d="M0 -5.500 V5.500" stroke="#b6b3a4" stroke-width="1.200"/><rect x="-2.500" y="-4" width="5" height="3" fill="#ECE9D8" stroke="#b6b3a4"/><rect x="-4" y="1" width="8" height="3" fill="#ECE9D8" stroke="#b6b3a4"/></g><g transform="translate(283 63.3)"><path d="M4.500 -5.500 V5.500" stroke="#b6b3a4" stroke-width="1.200"/><rect x="-4" y="-4" width="7" height="3" fill="none" stroke="#b6b3a4"/><rect x="-1.500" y="1" width="4.500" height="3" fill="none" stroke="#b6b3a4"/></g><g transform="translate(306 63.3)"><path d="M-5.500 -4.500 H5.500" stroke="#b6b3a4" stroke-width="1.200"/><rect x="-4" y="-3" width="3" height="7" fill="none" stroke="#b6b3a4"/><rect x="1" y="-3" width="3" height="4.500" fill="none" stroke="#b6b3a4"/></g><g transform="translate(323 63.3)"><path d="M-6 0 H6" stroke="#b6b3a4" stroke-width="1.200"/><rect x="-4" y="-2" width="3" height="4" fill="#ECE9D8" stroke="#b6b3a4"/><rect x="1" y="-3" width="3" height="6" fill="#ECE9D8" stroke="#b6b3a4"/></g><g transform="translate(340 63.3)"><path d="M-5.500 4.500 H5.500" stroke="#b6b3a4" stroke-width="1.200"/><rect x="-4" y="-1.500" width="3" height="4.500" fill="none" stroke="#b6b3a4"/><rect x="1" y="-4" width="3" height="7" fill="none" stroke="#b6b3a4"/></g><g transform="translate(362 63.3)"><path d="M-6 0 H6" stroke="#b6b3a4" stroke-width="1"/><rect x="-4.500" y="-2" width="2.500" height="4" fill="#ECE9D8" stroke="#b6b3a4"/><rect x="-1" y="-3" width="2.500" height="6" fill="#ECE9D8" stroke="#b6b3a4"/><circle cx="4" cy="0" r="1.500" fill="#ECE9D8" stroke="#b6b3a4"/></g><g transform="translate(379 63.3)"><path d="M0 -6 V6" stroke="#b6b3a4" stroke-width="1"/><rect x="-2" y="-5" width="4" height="2.500" fill="#ECE9D8" stroke="#b6b3a4"/><rect x="-3" y="-1" width="6" height="2.500" fill="#ECE9D8" stroke="#b6b3a4"/><rect x="-2" y="3" width="4" height="2.500" fill="#ECE9D8" stroke="#b6b3a4"/></g><g transform="translate(402 63.3)"><rect x="-5" y="-5" width="10" height="5" fill="none" stroke="#b6b3a4"/><rect x="-1.500" y="2.500" width="3" height="3" fill="#b6b3a4"/><path d="M-5 4 H-3 M3 4 H5" stroke="#b6b3a4"/></g><g transform="translate(419 63.3)"><rect x="0" y="-5" width="4.500" height="10" fill="none" stroke="#b6b3a4"/><rect x="-4.500" y="-1.500" width="3" height="3" fill="#b6b3a4"/><path d="M-3 -5 V-3 M-3 3 V5" stroke="#b6b3a4"/></g><g transform="translate(436 63.3)"><rect x="-5.500" y="-5.500" width="11" height="11" fill="none" stroke="#b6b3a4" stroke-dasharray="2.500 1.500"/><rect x="-2" y="-2" width="4" height="4" fill="#b6b3a4"/></g><g transform="translate(12 82.3) scale(0.95)"><path d="M-5 -5 L-5 4 L-3 2 L-1.500 5.500 L0 4.800 L-1.500 1.500 L1.500 1.500Z" fill="#111"/></g><g transform="translate(37.5 82.3) scale(0.95)"><path d="M-4.500 -3.500 H3.500 V1.500 L0 2 L-4.500 4 Z" fill="none" stroke="#111" stroke-width="1"/><g fill="#111"><circle cx="-4.500" cy="-3.500" r="1.300"/><circle cx="-0.500" cy="-3.500" r="1.300"/><circle cx="3.500" cy="-3.500" r="1.300"/><circle cx="3.500" cy="1.500" r="1.300"/><circle cx="-4.500" cy="4" r="1.300"/><circle cx="-4.500" cy="0" r="1.300"/></g></g><g transform="translate(61 82.3) scale(0.95)"><path d="M-5 -1 V-5.500 L-2.500 -1 V-5.500 L0 -1 V-5.500 L2.500 -1 V-5.500" fill="none" stroke="#c01818" stroke-width="1.100"/><path d="M-4 3.500 H2" stroke="#333" stroke-width="1"/><circle cx="-4.500" cy="3.500" r="1.500" fill="#888" stroke="#222" stroke-width=".8"/><circle cx="-1" cy="3.500" r="1.500" fill="#888" stroke="#222" stroke-width=".8"/><circle cx="2.500" cy="3.500" r="1.500" fill="#888" stroke="#222" stroke-width=".8"/></g><g transform="translate(85.5 82.3) scale(0.95)"><path d="M-3.500 -3 L-1.500 -5 L-0.500 -2 L-3 2 Q-4 5 -1.500 4.500 Q1 3 3 3.800" fill="none" stroke="#111" stroke-width="1.200"/><rect x="-2.500" y="-6" width="2.800" height="2.500" fill="#e8e020" stroke="#333" stroke-width=".6"/></g><g transform="translate(20.5 85.5) scale(0.85)"><path d="M-4.500 -1.800 H4.500 L0 2.200Z" fill="#1848c8"/><path d="M-4.500 -1.800 H4.500" stroke="#0a2a80" stroke-width=".6"/></g><g transform="translate(44.5 85.5) scale(0.85)"><path d="M-4.500 -1.800 H4.500 L0 2.200Z" fill="#1848c8"/><path d="M-4.500 -1.800 H4.500" stroke="#0a2a80" stroke-width=".6"/></g><g transform="translate(69 85.5) scale(0.85)"><path d="M-4.500 -1.800 H4.500 L0 2.200Z" fill="#1848c8"/><path d="M-4.500 -1.800 H4.500" stroke="#0a2a80" stroke-width=".6"/></g><g transform="translate(93 85.5) scale(0.85)"><path d="M-4.500 -1.800 H4.500 L0 2.200Z" fill="#1848c8"/><path d="M-4.500 -1.800 H4.500" stroke="#0a2a80" stroke-width=".6"/></g><g transform="translate(111 82.3)"><path d="M-5 -5 V5 M-2.500 -5 V5 M0 -5 V5 M2.500 -5 V5 M5 -5 V5" stroke="#b6b3a4" stroke-width="1.500"/><path d="M-6 -2 H6 M-6 2 H6" stroke="#b6b3a4" stroke-width="1"/></g><g transform="translate(128 82.3)"><path d="M-5.500 -4 V3.500 Q-4.300 5.500 -3 3.500 V-3.500 Q-1.800 -5.500 -0.500 -3.500 V3.500 Q0.800 5.500 2 3.500 V-3.500 Q3.200 -5.500 4.500 -3.500 V4.500" fill="none" stroke="#b6b3a4" stroke-width="1.200"/></g><g transform="translate(145 82.3)"><path d="M-6 4.500 L-3.500 -4.500 L-2.500 4.500 L0 -4.500 L1 4.500 L3.500 -4.500 L4.500 4.500" fill="none" stroke="#b6b3a4" stroke-width="1.200"/></g><g transform="translate(162 82.3)"><path d="M-5 5 V-3.500 H-1.500 V5 M-1.500 -3.500 H2 V5 M2 -3.500 H5 V5" fill="none" stroke="#b6b3a4" stroke-width="1.200"/></g><g transform="translate(179 82.3)"><rect x="-5.500" y="-5" width="11" height="10" fill="#c6c3b4"/></g><g transform="translate(196 82.3)"><path d="M-3.500 -5.500 V5.500 M0 -5.500 V5.500 M3.500 -5.500 V5.500 M-5.500 -3.500 H5.500 M-5.500 0 H5.500 M-5.500 3.500 H5.500" stroke="#b6b3a4" stroke-width="1.500"/></g><g transform="translate(213 82.3)"><path d="M-5.500 -2 Q-2.500 -5 0 -2.500 T5.500 -3 M-5.500 1 Q-2.500 -2 0 0.500 T5.500 0 M-5.500 4 Q-2.500 1 0 3.500 T5.500 3" fill="none" stroke="#c6c3b4" stroke-width="1.600"/></g><g transform="translate(253 82.3)"><path d="M-5.500 4 L4.500 -4.500 M-5.500 0 L0 2.500 L4.500 -1 M-3 5 L1 1" stroke="#b6b3a4" stroke-width="1" fill="none"/></g><g transform="translate(269.5 82.3)"><path d="M-4 -5 V5 M-1.300 -5 V5 M1.300 -5 V5 M4 -5 V5 M-6 -2 H6 M-6 2.500 H6" stroke="#b6b3a4" stroke-width="1.300"/></g><g transform="translate(286 82.3)"><path d="M-5.500 -4.500 L4.500 4.500 M-5.500 0 Q0 -1 3 -5 M-4 4.500 Q2 3 5 -1" stroke="#b6b3a4" stroke-width="1" fill="none"/></g><g transform="translate(303 82.3)"><rect x="-5" y="-4.500" width="10" height="9" fill="none" stroke="#b6b3a4" stroke-width="1.200"/><path d="M-2 -4.500 V4.500 M1.500 -4.500 V4.500 M-5 0 H5" stroke="#b6b3a4" stroke-width="1.100"/></g><g transform="translate(320 82.3)"><path d="M-5 5 L0 -5.500 L5 5 M-2 5 L0 0 L2 5" stroke="#b6b3a4" stroke-width="1.100" fill="none"/></g><g transform="translate(336.5 82.3)"><path d="M-5.500 4 L-4 -3 L-2.500 4 L-1 -5 L0.500 4 L2 -3 L3.500 4 L5 -1" stroke="#b6b3a4" stroke-width="1.300" fill="none"/></g><g transform="translate(353 82.3)"><path d="M-5 5 V-4 H5 V5 M-2 -4 V2 M2 -4 V2" stroke="#b6b3a4" stroke-width="1.800" fill="none"/></g><g transform="translate(369.5 82.3)"><rect x="-5" y="-5" width="10" height="10" fill="#c0bdae"/></g><g transform="translate(386.7 82.3)"><path d="M-5.500 -4.500 H5.500 M-5.500 -1.500 H5.500 M-5.500 1.500 H5.500 M-5.500 4.500 H5.500" stroke="#b6b3a4" stroke-width="1.200"/></g><g transform="translate(420 82.3)"><path d="M-5 -5 L-2 5 M-2.500 -5 L0 3 M0 -5 L2 3 M5 -5 L-1 5 M3 -2 L0 5" stroke="#b6b3a4" stroke-width=".9" fill="none"/></g><g transform="translate(437.4 82.3)"><ellipse cx="0" cy="0" rx="5.500" ry="3" fill="none" stroke="#b6b3a4" stroke-width="1.100"/><path d="M-3 1 Q0 -1.500 3 1" stroke="#b6b3a4" stroke-width="1" fill="none"/></g><g transform="translate(454.3 82.3)"><ellipse cx="0" cy="0.500" rx="5.500" ry="3" fill="none" stroke="#b6b3a4" stroke-width="1.100"/><path d="M-5 -4 Q0 0 5.500 -4.500 M-5 5 Q0 2 5.500 5" stroke="#b6b3a4" stroke-width="1" fill="none"/></g><g transform="translate(235.5 82.3)"><path d="M-5 -3 V3 M-2.500 -5 V5 M0 -5.500 V5.500 M2.500 -5 V5 M5 -3 V3" stroke="#222" stroke-width="1.500" stroke-dasharray="2.500 .800"/><path d="M-1.300 -3 V3 M1.300 -3 V3" stroke="#d8c820" stroke-width=".7"/></g><g transform="translate(491 82.3) scale(0.9)"><path d="M-5 -4 H3 V1 Q3 5 -1 5 L-5 1Z" fill="#b6b3a4"/><circle cx="3" cy="3" r="2.800" fill="#b6b3a4"/></g><g transform="translate(508 82.3) scale(0.9)"><circle cx="0" cy="0" r="4.500" fill="none" stroke="#b6b3a4" stroke-dasharray="1.500 1.500"/><path d="M-2 2 L3 -3 L1 3Z" fill="#b6b3a4"/></g><g transform="translate(525 82.3) scale(0.9)"><rect x="-5" y="-4.500" width="7" height="6" fill="#b6b3a4"/><circle cx="2.500" cy="2.500" r="3" fill="#b6b3a4" stroke="#ECE9D8" stroke-width="1"/></g><g transform="translate(541 82.3) scale(0.9)"><circle cx="0" cy="0" r="4.500" fill="none" stroke="#b6b3a4" stroke-dasharray="1.500 1.500"/><path d="M0 0 H4.500 A4.500 4.500 0 0 1 0 4.500Z" fill="#b6b3a4"/></g><g transform="translate(558 82.3) scale(0.9)"><path d="M-4.500 -4.500 H3 V-1 H-1 V3 H-4.500Z" fill="#b6b3a4"/><rect x="0" y="0" width="5" height="5" fill="none" stroke="#b6b3a4" stroke-dasharray="1.500 1.500"/></g><g transform="translate(574.5 82.3) scale(0.9)"><path d="M-5.500 -5 H0 L-5.500 0.500Z" fill="#b6b3a4"/><circle cx="2" cy="2" r="3.500" fill="#b6b3a4"/></g><g transform="translate(591.5 82.3) scale(0.9)"><path d="M-5.500 -5 H0 L-5.500 0.500Z" fill="#b6b3a4"/><path d="M-2 -1 H3 L-2 4Z" fill="#b6b3a4"/><circle cx="3" cy="3" r="2.800" fill="#b6b3a4"/></g><g transform="translate(608 82.3) scale(0.95)"><rect x="-5.500" y="-4.500" width="7.500" height="6" fill="#e01020"/><circle cx="2.500" cy="2.500" r="3.300" fill="#e01020" stroke="#500" stroke-width=".8"/><circle cx="1.500" cy="1.500" r="1.200" fill="#f8b0b0"/></g><g transform="translate(631 82.3) scale(0.95)"><rect x="-6" y="-5.500" width="5.500" height="5.500" fill="#1030c8" stroke="#081860" stroke-width=".6"/><circle cx="3" cy="2.500" r="3.300" fill="#e81818"/></g><g transform="translate(646 82.3) scale(0.95)"><rect x="-5.500" y="-4" width="7" height="6" fill="#404890" stroke="#111" stroke-width=".8"/><circle cx="2.500" cy="2" r="3" fill="#e04848" stroke="#400" stroke-width=".8"/><path d="M0.500 4 L4.500 0" stroke="#fff" stroke-width=".8"/></g></svg>
<div class="" style="left:98px;top:93px;width:706px;height:398px;background:#E4E4E4;"></div>
<div class="" style="left:98px;top:93px;width:694px;height:12px;background:#E6E6E6;"></div>
<div class="" style="left:98px;top:93px;width:13px;height:386px;background:#E6E6E6;"></div>
<svg style="left:0;top:0" width="1000" height="540" viewBox="0 0 1000 540" shape-rendering="crispEdges"><path d="M97.5 491 V92.5 H804.5 V98" fill="none" stroke="#1c1c1c" stroke-width="1"/><path d="M97 92.300 H805" stroke="#1c1c1c" stroke-width="1.300"/><path d="M792 97.5 H804.5" stroke="#222" stroke-width="1"/><path d="M110.5 105 H792" stroke="#1c1c1c" stroke-width="1"/><path d="M111 93 V479" stroke="#1c1c1c" stroke-width="1"/><path d="M97.5 490.5 H102.5 V479" stroke="#222" fill="none" stroke-width="1"/><path d="M118.3 99.3 V105 M125.0 101.5 V105 M131.8 101.5 V105 M138.5 101.5 V105 M145.3 101.5 V105 M152.0 93 V105 M158.7 101.5 V105 M165.5 101.5 V105 M172.2 101.5 V105 M179.0 101.5 V105 M185.7 99.3 V105 M192.4 101.5 V105 M199.2 101.5 V105 M205.9 101.5 V105 M212.7 101.5 V105 M219.4 93 V105 M226.1 101.5 V105 M232.9 101.5 V105 M239.6 101.5 V105 M246.4 101.5 V105 M253.1 99.3 V105 M259.8 101.5 V105 M266.6 101.5 V105 M273.3 101.5 V105 M280.1 101.5 V105 M286.8 93 V105 M293.5 101.5 V105 M300.3 101.5 V105 M307.0 101.5 V105 M313.8 101.5 V105 M320.5 99.3 V105 M327.2 101.5 V105 M334.0 101.5 V105 M340.7 101.5 V105 M347.5 101.5 V105 M354.2 93 V105 M360.9 101.5 V105 M367.7 101.5 V105 M374.4 101.5 V105 M381.2 101.5 V105 M387.9 99.3 V105 M394.6 101.5 V105 M401.4 101.5 V105 M408.1 101.5 V105 M414.9 101.5 V105 M421.6 93 V105 M428.3 101.5 V105 M435.1 101.5 V105 M441.8 101.5 V105 M448.6 101.5 V105 M455.3 99.3 V105 M462.0 101.5 V105 M468.8 101.5 V105 M475.5 101.5 V105 M482.3 101.5 V105 M489.0 93 V105 M495.7 101.5 V105 M502.5 101.5 V105 M509.2 101.5 V105 M516.0 101.5 V105 M522.7 99.3 V105 M529.4 101.5 V105 M536.2 101.5 V105 M542.9 101.5 V105 M549.7 101.5 V105 M556.4 93 V105 M563.1 101.5 V105 M569.9 101.5 V105 M576.6 101.5 V105 M583.4 101.5 V105 M590.1 99.3 V105 M596.8 101.5 V105 M603.6 101.5 V105 M610.3 101.5 V105 M617.1 101.5 V105 M623.8 93 V105 M630.5 101.5 V105 M637.3 101.5 V105 M644.0 101.5 V105 M650.8 101.5 V105 M657.5 99.3 V105 M664.2 101.5 V105 M671.0 101.5 V105 M677.7 101.5 V105 M684.5 101.5 V105 M691.2 93 V105 M697.9 101.5 V105 M704.7 101.5 V105 M711.4 101.5 V105 M718.2 101.5 V105 M724.9 99.3 V105 M731.6 101.5 V105 M738.4 101.5 V105 M745.1 101.5 V105 M751.9 101.5 V105 M758.6 93 V105 M765.3 101.5 V105 M772.1 101.5 V105 M778.8 101.5 V105 M785.6 101.5 V105" stroke="#222" stroke-width="1"/><path d="M107.5 108.1 H111 M105.3 114.8 H111 M107.5 121.5 H111 M107.5 128.3 H111 M107.5 135.0 H111 M107.5 141.8 H111 M98 148.5 H111 M107.5 155.2 H111 M107.5 162.0 H111 M107.5 168.7 H111 M107.5 175.5 H111 M105.3 182.2 H111 M107.5 188.9 H111 M107.5 195.7 H111 M107.5 202.4 H111 M107.5 209.2 H111 M98 215.9 H111 M107.5 222.6 H111 M107.5 229.4 H111 M107.5 236.1 H111 M107.5 242.9 H111 M105.3 249.6 H111 M107.5 256.3 H111 M107.5 263.1 H111 M107.5 269.8 H111 M107.5 276.6 H111 M98 283.3 H111 M107.5 290.0 H111 M107.5 296.8 H111 M107.5 303.5 H111 M107.5 310.3 H111 M105.3 317.0 H111 M107.5 323.7 H111 M107.5 330.5 H111 M107.5 337.2 H111 M107.5 344.0 H111 M98 350.7 H111 M107.5 357.4 H111 M107.5 364.2 H111 M107.5 370.9 H111 M107.5 377.7 H111 M105.3 384.4 H111 M107.5 391.1 H111 M107.5 397.9 H111 M107.5 404.6 H111 M107.5 411.4 H111 M98 418.1 H111 M107.5 424.8 H111 M107.5 431.6 H111 M107.5 438.3 H111 M107.5 445.1 H111 M105.3 451.8 H111 M107.5 458.5 H111 M107.5 465.3 H111 M107.5 472.0 H111" stroke="#222" stroke-width="1"/><path d="M100 101.5 H108 M105.5 95 V103" stroke="#888" stroke-width="1"/></svg>
<span class="t" style="left:153.5px;top:92px;font-size:9.5px;color:#111;letter-spacing:0;transform-origin:0 0;transform:scaleX(0.86);">-800</span>
<span class="t" style="left:220.9px;top:92px;font-size:9.5px;color:#111;letter-spacing:0;transform-origin:0 0;transform:scaleX(0.86);">-600</span>
<span class="t" style="left:288.3px;top:92px;font-size:9.5px;color:#111;letter-spacing:0;transform-origin:0 0;transform:scaleX(0.86);">-400</span>
<span class="t" style="left:355.7px;top:92px;font-size:9.5px;color:#111;letter-spacing:0;transform-origin:0 0;transform:scaleX(0.86);">-200</span>
<span class="t" style="left:423.1px;top:92px;font-size:9.5px;color:#111;letter-spacing:0;transform-origin:0 0;transform:scaleX(0.86);">0</span>
<span class="t" style="left:490.5px;top:92px;font-size:9.5px;color:#111;letter-spacing:0;transform-origin:0 0;transform:scaleX(0.86);">200</span>
<span class="t" style="left:557.9px;top:92px;font-size:9.5px;color:#111;letter-spacing:0;transform-origin:0 0;transform:scaleX(0.86);">400</span>
<span class="t" style="left:625.3px;top:92px;font-size:9.5px;color:#111;letter-spacing:0;transform-origin:0 0;transform:scaleX(0.86);">600</span>
<span class="t" style="left:692.7px;top:92px;font-size:9.5px;color:#111;letter-spacing:0;transform-origin:0 0;transform:scaleX(0.86);">800</span>
<span class="t" style="left:760.1px;top:92px;font-size:9.5px;color:#111;letter-spacing:0;transform-origin:0 0;transform:scaleX(0.86);">1000</span>
<div style="left:98px;top:106px;width:13px;height:373px;overflow:hidden;">
<span class="t" style="left:1px;top:41.0px;font-size:9.5px;color:#111;letter-spacing:0;transform-origin:0 0;transform:rotate(-90deg) scaleX(0.85);">400</span>
<span class="t" style="left:1px;top:108.4px;font-size:9.5px;color:#111;letter-spacing:0;transform-origin:0 0;transform:rotate(-90deg) scaleX(0.85);">200</span>
<span class="t" style="left:1px;top:175.8px;font-size:9.5px;color:#111;letter-spacing:0;transform-origin:0 0;transform:rotate(-90deg) scaleX(0.85);">0</span>
<span class="t" style="left:1px;top:243.2px;font-size:9.5px;color:#111;letter-spacing:0;transform-origin:0 0;transform:rotate(-90deg) scaleX(0.85);">-200</span>
<span class="t" style="left:1px;top:310.6px;font-size:9.5px;color:#111;letter-spacing:0;transform-origin:0 0;transform:rotate(-90deg) scaleX(0.85);">-400</span>
<span class="t" style="left:1px;top:378.0px;font-size:9.5px;color:#111;letter-spacing:0;transform-origin:0 0;transform:rotate(-90deg) scaleX(0.85);">-600</span>
</div>
<svg style="left:0;top:0" width="1000" height="540" viewBox="0 0 1000 540"><circle cx="421.3" cy="283.3" r="66.7" fill="#C2C2C2" stroke="#3a3a3a" stroke-width="1"/><circle cx="421.3" cy="283.3" r="33.6" fill="#fff" stroke="#3a3a3a" stroke-width="1"/><g fill="none" stroke-width="1" shape-rendering="crispEdges"><rect x="370.5" y="202.5" width="101.5" height="68" stroke="#a5a53a"/><rect x="370.5" y="297.5" width="101.5" height="66.5" stroke="#a5a53a"/><rect x="340.5" y="232.5" width="67.5" height="101.5" stroke="#843850"/><rect x="435.5" y="232.5" width="67" height="101.5" stroke="#9a4a6a"/><path d="M421.5 147 V428" stroke="#2f842f"/><path d="M281 287.100 H560" stroke="#0c1c0c" stroke-width="1.600" shape-rendering="geometricPrecision"/><rect x="418.5" y="144.5" width="5" height="5" fill="#111" stroke="none"/><rect x="418.5" y="425.5" width="5" height="5" fill="#111" stroke="none"/></g><g stroke="#c00c14" fill="none"><rect x="417.300" y="279.400" width="8.400" height="7.600" rx="2" stroke-width="1" stroke="#d83038"/><path d="M415 283 H428.200 M421.500 277.200 V289.700" stroke-width="1.700"/></g></svg>
<div class="" style="left:792px;top:98px;width:12px;height:381px;background:linear-gradient(90deg,#e9e9e6,#ffffff 60%,#f4f4f2);"></div>
<div class="" style="left:793px;top:99px;width:11px;height:11px;background:#c6d5fb;border-radius:2px;"></div>
<div class="" style="left:793px;top:467px;width:11px;height:11px;background:#c6d5fb;border-radius:2px;"></div>
<div class="" style="left:793px;top:196px;width:11px;height:196px;background:linear-gradient(90deg,#c9d7fc,#d6e0fd 50%,#bccbf5);border-radius:2px;"></div>
<div class="" style="left:104px;top:479px;width:688px;height:12px;background:linear-gradient(#e9e9e6,#ffffff 60%,#f4f4f2);"></div>
<div class="" style="left:105px;top:480px;width:11px;height:11px;background:#c6d5fb;border-radius:2px;"></div>
<div class="" style="left:781px;top:480px;width:11px;height:11px;background:#c6d5fb;border-radius:2px;"></div>
<div class="" style="left:142px;top:480px;width:638px;height:11px;background:linear-gradient(#c9d7fc,#d6e0fd 50%,#bccbf5);border-radius:2px;"></div>
<div class="" style="left:792px;top:479px;width:12px;height:12px;background:#ECE9D8;"></div>
<svg style="left:0;top:0" width="1000" height="540" viewBox="0 0 1000 540" fill="none" stroke="#3a55a0" stroke-width="1.6"><path d="M795.5 106.5 L798.5 103.5 L801.5 106.5"/><path d="M795.5 471 L798.5 474 L801.5 471"/><path d="M111.8 482.5 L108.8 485.5 L111.8 488.5"/><path d="M785 482.5 L788 485.5 L785 488.5"/><g stroke="#9db0e8" stroke-width="1"><path d="M795.5 292 H801.5 M795.5 294 H801.5 M795.5 296 H801.5"/><path d="M459 483 V489 M461 483 V489 M463 483 V489"/></g></svg>
<div class="btn" style="left:1.5px;top:93.5px;width:21.5px;height:20px;"></div>
<svg style="left:0;top:0" width="1000" height="540" viewBox="0 0 1000 540" fill="none"><g transform="translate(12.3 102.5) scale(1.08)"><path d="M-3 -6.500 V4 L-0.800 2 L1 6 L2.500 5.300 L0.800 1.500 L3.800 1.500Z" fill="#fff" stroke="#111" stroke-width="1"/></g><g transform="translate(12.3 124.0) scale(1.08)"><path d="M-2.500 -6.500 L-1 -3 L3 -3.500 L0.500 -0.800 L2 3 L-2 1 L-5.500 3 L-4.500 -1 L-7 -3.500 L-3.500 -3.500Z" fill="none" stroke="#222" stroke-width=".9" stroke-dasharray="1.500 1"/><path d="M1.500 0 V6 L3 4.800 L4 7 L5 6.500 L4 4.300 L6 4.300Z" fill="#fff" stroke="#111" stroke-width=".8"/></g><g transform="translate(12.3 145.4) scale(1.08)"><path d="M-6.500 -6 Q-3 -1 -1 -0.500 Q3 -1 6.500 -6.500" fill="none" stroke="#222" stroke-width="1"/><circle cx="-1" cy="0" r="1.500" fill="#fff" stroke="#222" stroke-width=".8"/><path d="M0.500 2 V8 L5.500 5.500Z" fill="#2060c8"/></g><g transform="translate(12.3 166.8) scale(1.08)"><path d="M-6.500 0 V-5.500 L-5 -1 V-5.500 L-3.500 -1 V-5.500 L-2 -1 V-5.500 L-0.500 -1 V-5.500 L1 -1" fill="none" stroke="#d02020" stroke-width=".9"/><path d="M-6 1.500 H2" stroke="#444" stroke-width=".8" stroke-dasharray="1.500 1"/><path d="M0.500 3 V9 L5.500 6.500Z" fill="#2060c8"/></g><g transform="translate(12.3 188.3) scale(1.08)"><path d="M-7 -2.500 L-6 -6.500 L-5 -3.500 L-4 -6.500 L-3 -2.500 M1 4.500 L2 1 L3 3.500 L4 1 L5 4.500" fill="none" stroke="#d01818" stroke-width="1.300"/><path d="M-7.500 4.500 L7 -5.500" stroke="#333" stroke-width=".8"/><path d="M-5.500 0 l2.500 0 M-3.500 -1.500 l-2 1.500 l2 1.500 M-3 6 H5" stroke="#1a3a9a" stroke-width="1.100" fill="none"/></g><g transform="translate(12.3 209.8) scale(1.08)"><path d="M-7 -6 V2 M-5 -6 V2 M-3 -6 V2 M-1 -6 V2 M1 -6 V-1" stroke="#555" stroke-width=".9" stroke-dasharray="3 .800"/><path d="M-2 1.500 L5 6 M-2 6 L5 1.500" stroke="#d02020" stroke-width="1"/><circle cx="-3" cy="6" r="1.500" fill="none" stroke="#d02020" stroke-width=".9"/><circle cx="-3" cy="1.800" r="1.300" fill="none" stroke="#d02020" stroke-width=".9"/></g><g transform="translate(12.3 231.2) scale(1.08)"><path d="M-5 0.500 L5 -3.500 M-5 -1.500 L4 4" stroke="#222" stroke-width="1.500"/><circle cx="-6" cy="2" r="1.800" fill="none" stroke="#111" stroke-width="1.200"/><circle cx="-6" cy="-2.500" r="1.800" fill="none" stroke="#111" stroke-width="1.200"/><path d="M2 1.500 L6 -1 M5 -7.500 V-2" stroke="#d02020" stroke-width=".9"/><rect x="4" y="-8" width="2.500" height="4" fill="#aaa" stroke="#555" stroke-width=".6"/></g><g transform="translate(12.3 252.7) scale(1.08)"><path d="M-5 -4.500 V5" stroke="#1a50c0" stroke-width="1.800"/><path d="M-8 -3.500 L-5 -7.500 L-2 -3.500Z M-8 4 L-5 8 L-2 4Z" fill="#1a50c0"/><path d="M3 -3 V4 M0.500 4 L3 1 L5.500 4" stroke="#d03030" stroke-width=".9" fill="none"/><rect x="1.500" y="-7.500" width="3" height="4.500" fill="#bbb" stroke="#555" stroke-width=".6"/></g><g transform="translate(12.3 274.1) scale(1.08)"><path d="M-7.500 -2 Q0 -7 7.500 -2 L5 5.500 Q0 3 -5 5.500Z M-3 -4 L-2 4 M3 -4 L2 4" fill="#f4f2e8" stroke="#b8b5a5" stroke-width="1"/></g><g transform="translate(12.3 295.5) scale(1.08)"><ellipse cx="0" cy="3" rx="6.500" ry="3.500" fill="none" stroke="#a01030" stroke-width="1.300"/><path d="M-6.500 -4 Q0 -7 6.500 -4" fill="none" stroke="#a01030" stroke-width="1.300"/><path d="M0 -7.500 V-1 M-2.500 -5.500 H2.500 M-2 0 H2" stroke="#1a60d0" stroke-width="1.200"/></g><g transform="translate(36 102.5) scale(1.1)"><path d="M-6 -2.500 L-0.500 -6 L6 -3.500 L6 3.500 L-0.500 1.500 L-6 5.500Z" fill="#b8d4f4" stroke="#1a3a7a" stroke-width="1"/><path d="M-0.500 -6 V1.500" stroke="#1a3a7a" stroke-width=".8"/><rect x="-7.3" y="-3.8" width="2.600" height="2.600" fill="#e8e060" stroke="#333" stroke-width=".7"/><rect x="-1.8" y="-7.3" width="2.600" height="2.600" fill="#e8e060" stroke="#333" stroke-width=".7"/><rect x="4.7" y="-4.8" width="2.600" height="2.600" fill="#e8e060" stroke="#333" stroke-width=".7"/><rect x="4.7" y="2.2" width="2.600" height="2.600" fill="#e8e060" stroke="#333" stroke-width=".7"/><rect x="-1.8" y="0.19999999999999996" width="2.600" height="2.600" fill="#e8e060" stroke="#333" stroke-width=".7"/><rect x="-7.3" y="4.2" width="2.600" height="2.600" fill="#e8e060" stroke="#333" stroke-width=".7"/></g><g transform="translate(36 124.0) scale(1.1)"><path d="M-5.500 5 V-2 Q-5.500 -6 0 -6 Q5.500 -6 5.500 -2 V5Z" fill="#b8d4f4" stroke="#1a3a7a" stroke-width="1"/><path d="M-3 4 L2 -4 L3 4Z" fill="#e0ecfc"/><rect x="-6.8" y="3.7" width="2.600" height="2.600" fill="#e8e060" stroke="#333" stroke-width=".7"/><rect x="4.2" y="3.7" width="2.600" height="2.600" fill="#e8e060" stroke="#333" stroke-width=".7"/><rect x="-6.8" y="-2.8" width="2.600" height="2.600" fill="#e8e060" stroke="#333" stroke-width=".7"/><rect x="4.2" y="-2.8" width="2.600" height="2.600" fill="#e8e060" stroke="#333" stroke-width=".7"/><circle cx="0" cy="-6" r="1.300" fill="#e02020"/></g><g transform="translate(36 145.4) scale(1.1)"><circle cx="0" cy="0" r="6" fill="#c8dcf6" stroke="#1a3a7a" stroke-width="1.100"/><path d="M0 -6 V6 M-6 0 H6" stroke="#d01818" stroke-width="1"/><path d="M0 -3 Q4 -3 4 0 Q4 3 0 3" fill="none" stroke="#1a3a7a" stroke-width="1"/><path d="M-8.500 0 l2.500 -2 v4Z M8.500 0 l-2.500 -2 v4Z" fill="#e01818"/></g><g transform="translate(36 166.8) scale(1.1)"><path d="M-4 -5 H0 Q5.500 -5 5.500 0 Q5.500 5.500 0 5.500 H-4Z" fill="#d4e4f8" stroke="#1a3a7a" stroke-width="1.100"/><path d="M-1.500 -2.500 V3 Q2.500 3 2.500 0 Q2.500 -2.500 -1.500 -2.500" fill="#ECE9D8" stroke="#1a3a7a" stroke-width=".9"/><path d="M-7 -6 L6 5 M-7 0.500 H7 M-4 -8 V7" stroke="#d01818" stroke-width=".9"/><rect x="-6.500" y="-7.500" width="2.500" height="2.500" fill="#e02020"/></g><g transform="translate(36 188.3) scale(1.1)"><path d="M-7 0 Q-7 -6.500 0 -6.500 Q7 -6.500 7 0 Q7 4 4.500 6 L2 6 Q2.500 2 0 2 Q-2.500 2 -2 6 L-4.500 6 Q-7 4 -7 0Z" fill="#b8d4f4" stroke="#1a3a7a" stroke-width="1.100"/><path d="M-4.500 -5 V4 M0 -6.500 V2 M4.500 -5 V4 M-7 -1 H7" stroke="#eaf2fc" stroke-width="1"/></g><g transform="translate(36 209.8) scale(1.1)"><path d="M-7 6.500 L-1.500 -6.500 H1.500 L7 6.500 H3.500 L2.300 3 H-2.300 L-3.500 6.500Z" fill="#d8e6fa" stroke="#1a3a7a" stroke-width="1.200"/><path d="M-1.300 0.500 H1.300 L0 -3.500Z" fill="#ECE9D8" stroke="#1a3a7a" stroke-width=".8"/></g><g transform="translate(36 231.2) scale(1.1)"><g transform="translate(-4 0)"><circle cx="0" cy="-5.500" r="1.600" fill="#f0b020"/><path d="M-3.500 -3.500 H3.500 L2.800 1 H-2.800Z" fill="#f0b020"/><path d="M-3.500 -3.500 L-4 2 M3.500 -3.500 L4 2" stroke="#2030c0" stroke-width="1.200"/><path d="M-2.500 0 H2.500 L2.300 7 H0.500 L0 3 L-0.500 7 H-2.300Z" fill="#2838c8"/></g><g transform="translate(4 0)"><circle cx="0" cy="-5.500" r="1.600" fill="#f0b020"/><path d="M-3.500 -3.500 H3.500 L2.800 1 H-2.800Z" fill="#f0b020"/><path d="M-3.500 -3.500 L-4 2 M3.500 -3.500 L4 2" stroke="#2030c0" stroke-width="1.200"/><path d="M-2.500 0 H2.500 L2.300 7 H0.500 L0 3 L-0.500 7 H-2.300Z" fill="#2838c8"/></g></g><g transform="translate(36 252.7) scale(1.1)"><path d="M-7 -1 Q0 -9 6 -3 L4 2 Q0 -2 -5 4.500Z" fill="#b8d4f4" stroke="#1a3a7a" stroke-width="1.100"/><circle cx="0" cy="-1.500" r="1.300" fill="#e02020"/><path d="M-8 1 l2.500 -1 l-0.500 2.500Z" fill="#222"/><rect x="5.2" y="-4.8" width="2.600" height="2.600" fill="#e8e060" stroke="#333" stroke-width=".7"/><rect x="5.2" y="-0.30000000000000004" width="2.600" height="2.600" fill="#e8e060" stroke="#333" stroke-width=".7"/><rect x="5.2" y="4.2" width="2.600" height="2.600" fill="#e8e060" stroke="#333" stroke-width=".7"/><path d="M6.500 -3.500 V5.500 M-5 5 H6" stroke="#333" stroke-width=".8"/></g><g transform="translate(36 274.1)"><path d="M-5.500 5.500 L5.500 -5.500" stroke="#c06060" stroke-width=".9"/><path d="M-3 1.500 l2 2 M-1 -0.500 l2 2 M1 -2.500 l2 2" stroke="#444" stroke-width=".8"/><rect x="-7.3" y="4.7" width="2.600" height="2.600" fill="#ddd" stroke="#333" stroke-width=".7"/><rect x="4.7" y="-7.3" width="2.600" height="2.600" fill="#e8e060" stroke="#333" stroke-width=".7"/></g><g transform="translate(36 295.5)"><path d="M-5.500 5.500 L5.500 -5.500" stroke="#c03030" stroke-width="1"/><path d="M-3.500 2 l1.500 1.500 l1.500 -3.500 l1.500 1.500 l1.500 -3.500 l1.500 1.500" stroke="#c03030" stroke-width=".9" fill="none"/><path d="M-4 4 L4 -4" stroke="#e8b0b0" stroke-width="2.200"/><path d="M-3.500 3.500 l2.500 -1 l-1 -1.500 l2.500 -1 l-1 -1.500 l2.500 -1" stroke="#c03030" stroke-width=".8" fill="none"/><rect x="-7.3" y="4.7" width="2.600" height="2.600" fill="#ddd" stroke="#333" stroke-width=".7"/><rect x="4.7" y="-7.3" width="2.600" height="2.600" fill="#e8e060" stroke="#333" stroke-width=".7"/></g><g transform="translate(36 317.0)"><path d="M-5.500 5.500 L5.500 -5.500" stroke="#c03030" stroke-width="1"/><path d="M-3.500 1.500 l3 0.500 l-1.500 -3Z M0 -2 l3 0.500 l-1.500 -3Z" fill="#e01818"/><rect x="-7.3" y="4.7" width="2.600" height="2.600" fill="#ddd" stroke="#333" stroke-width=".7"/><rect x="4.7" y="-7.3" width="2.600" height="2.600" fill="#e8e060" stroke="#333" stroke-width=".7"/></g><g transform="translate(36 338.4)"><path d="M-5.500 5.500 L5.500 -5.500" stroke="#c03030" stroke-width="1"/><path d="M-2.500 2.500 L2.500 -2.500" stroke="#e06060" stroke-width="2"/><rect x="-7.3" y="4.7" width="2.600" height="2.600" fill="#ddd" stroke="#333" stroke-width=".7"/><rect x="4.7" y="-7.3" width="2.600" height="2.600" fill="#e8e060" stroke="#333" stroke-width=".7"/></g><g transform="translate(36 359.9)"><path d="M-5.500 5.500 L5.500 -5.500" stroke="#c03030" stroke-width="1"/><path d="M-4 4 l1 -3 l1 1.500 l1.500 -3.500 l1 1.500 l1.500 -3.500 l1 1.500 l1 -2.500" stroke="#e01818" stroke-width="1.500" fill="none"/><rect x="-7.3" y="4.7" width="2.600" height="2.600" fill="#ddd" stroke="#333" stroke-width=".7"/><rect x="4.7" y="-7.3" width="2.600" height="2.600" fill="#e8e060" stroke="#333" stroke-width=".7"/></g><g transform="translate(36 381.3)"><path d="M-4.500 5.500 V-2.500 H-1 L4.500 5.500 V-6" fill="none" stroke="#c02828" stroke-width="1"/><g fill="#222"><circle cx="-4.500" cy="5.500" r="1.200"/><circle cx="-4.500" cy="-2.500" r="1.200"/><circle cx="-1" cy="-2.500" r="1.200"/><circle cx="4.500" cy="5.500" r="1.200"/><circle cx="4.500" cy="-6" r="1.200"/></g></g><g transform="translate(36 402.8)"><path d="M-4.500 5.500 V-2.500 H-1 L4.500 5.500 V-6" fill="none" stroke="#d82828" stroke-width="3"/><g fill="#222"><circle cx="-4.500" cy="5.500" r="1.200"/><circle cx="-4.500" cy="-2.500" r="1.200"/><circle cx="-1" cy="-2.500" r="1.200"/><circle cx="4.500" cy="5.500" r="1.200"/><circle cx="4.500" cy="-6" r="1.200"/></g></g><g transform="translate(36 424.2)"><circle cx="-3" cy="-3.500" r="4" fill="#e8a8c8" stroke="#4a2a5a" stroke-width="1"/><circle cx="3.500" cy="3.500" r="4" fill="#d8e8f8" stroke="#333" stroke-width="1"/><path d="M-3 -5.500 V-1.500 M-5 -3.500 H-1" stroke="#802040" stroke-width=".7"/><path d="M1.500 -1.500 L-1 1.500" stroke="#208020" stroke-width=".9"/><circle cx="3.500" cy="3.500" r="1.800" fill="none" stroke="#88a" stroke-width=".7" stroke-dasharray="1 1"/></g><g transform="translate(36 445.7)"><circle cx="0" cy="0" r="7" fill="#c8c8f0" stroke="#2a2a6a" stroke-width="1.200"/><circle cx="0" cy="0" r="5" fill="#f0d0e0" stroke="#d04060" stroke-width="1" stroke-dasharray="1.200 1"/><ellipse cx="0" cy="0" rx="1.500" ry="2.800" fill="#fff" stroke="#2a2a6a" stroke-width=".9"/></g><g transform="translate(60 102.5) scale(1.05)"><path d="M-5 -4 L-5.500 -7 L-3 -5.500 L-1 -7.500 L0 -5 M1 -5 L2 -7.500 L4 -5.500 L6 -7 L5.500 -3.500" fill="#e81830" stroke="#e81830" stroke-width="1"/><circle cx="-3" cy="-4.500" r="2.300" fill="#e81830"/><circle cx="3.500" cy="-4.500" r="2.300" fill="#e81830"/><path d="M-3 -2 L0 1.500 L3.500 -2 M0 1.500 V-1" stroke="#18a030" stroke-width="1.300" fill="none"/><path d="M-3.500 1.500 H3.500 L2.500 4 H-2.500Z" fill="#1a4ac0"/><path d="M-5.500 6.5 H-1 M1 6.5 H5.500" stroke="#0a3a8a" stroke-width="1.300"/><path d="M-6.500 6.5 l2.200 -1.800 v3.600Z M6.500 6.5 l-2.200 -1.800 v3.600Z" fill="#0a3a8a"/></g><g transform="translate(60 124.0) scale(1.05)"><path d="M-2 -7.500 H2 L0.500 -4 H-0.500Z" fill="#fff" stroke="#333" stroke-width=".8"/><path d="M-6 -4 L-3 -1 M6 -4 L3 -1 M-4.500 -5.500 L-2 -1.500 M4.500 -5.500 L2 -1.500" stroke="#999" stroke-width="1.400"/><path d="M-3 -1 L0 2 L3 -1 M0 2 V-3.500" stroke="#18a030" stroke-width="1.300" fill="none"/><path d="M-3.500 2 H3.500 L2.500 4 H-2.500Z" fill="#999"/><path d="M-5.500 6.5 H-1 M1 6.5 H5.500" stroke="#0a3a8a" stroke-width="1.300"/><path d="M-6.500 6.5 l2.200 -1.800 v3.600Z M6.500 6.5 l-2.200 -1.800 v3.600Z" fill="#0a3a8a"/></g><g transform="translate(60 145.4) scale(1.05)"><path d="M-6 2.500 V-6 L-4.500 2.500 V-6 L-3 2.500 V-6 L-1.500 2.500 V-6 L0 2.500 V-6 L1.500 2.500 V-6 L3 2.500 V-6 L4.500 2.500 V-6 L6 2.500" fill="none" stroke="#d02020" stroke-width=".9"/><path d="M-6 -2 H6" stroke="#d02020" stroke-width=".7"/><path d="M-5.500 6 H-1 M1 6 H5.500" stroke="#0a3a8a" stroke-width="1.300"/><path d="M-6.500 6 l2.200 -1.800 v3.600Z M6.500 6 l-2.200 -1.800 v3.600Z" fill="#0a3a8a"/></g><g transform="translate(60 166.8) scale(1.05)"><rect x="-3" y="-5.500" width="6" height="8" rx="1.500" fill="#b01010" stroke="#500" stroke-width=".8"/><path d="M-3 -3 H3 M-3 0 H3" stroke="#400" stroke-width=".8"/><path d="M3 -5 Q6.500 -6 6 -2 L4.500 -2.500" fill="none" stroke="#333" stroke-width=".8"/><rect x="-1.500" y="-7.500" width="3" height="2" fill="#ccc" stroke="#333" stroke-width=".6"/><path d="M-4 3 H4" stroke="#1a3a8a" stroke-width="1.400"/><path d="M-5.500 6.5 H-1 M1 6.5 H5.500" stroke="#0a3a8a" stroke-width="1.300"/><path d="M-6.500 6.5 l2.200 -1.800 v3.600Z M6.500 6.5 l-2.200 -1.800 v3.600Z" fill="#0a3a8a"/></g><g transform="translate(60 188.3) scale(1.05)"><rect x="-1" y="-8" width="2.500" height="4" fill="#ccc" stroke="#666" stroke-width=".6"/><path d="M0.200 -4 V2 M-3.500 -1.500 L0.200 2.500 L4 -1.500" stroke="#d02828" stroke-width=".9" fill="none"/><path d="M-2 -2.500 H2.500" stroke="#d02828" stroke-width=".7" stroke-dasharray="1 1"/><path d="M-5.500 5.5 H-1 M1 5.5 H5.500" stroke="#0a3a8a" stroke-width="1.300"/><path d="M-6.500 5.5 l2.200 -1.800 v3.600Z M6.500 5.5 l-2.200 -1.800 v3.600Z" fill="#0a3a8a"/></g><g transform="translate(60 208.8)"><text x="0" y="1.500" font-size="10" text-anchor="middle" fill="#111" stroke="#111" stroke-width=".35" font-family="Liberation Sans,sans-serif" textLength="16" lengthAdjust="spacingAndGlyphs">1000</text><path d="M-5.500 6 H-1 M1 6 H5.500" stroke="#0a3a8a" stroke-width="1.300"/><path d="M-6.500 6 l2.200 -1.800 v3.600Z M6.500 6 l-2.200 -1.800 v3.600Z" fill="#0a3a8a"/></g><g transform="translate(60 230.2)"><text x="0" y="1.500" font-size="10" text-anchor="middle" fill="#111" stroke="#111" stroke-width=".35" font-family="Liberation Sans,sans-serif" textLength="12.5" lengthAdjust="spacingAndGlyphs">100</text><path d="M-5.500 6 H-1 M1 6 H5.500" stroke="#0a3a8a" stroke-width="1.300"/><path d="M-6.500 6 l2.200 -1.800 v3.600Z M6.500 6 l-2.200 -1.800 v3.600Z" fill="#0a3a8a"/></g><g transform="translate(60 251.7)"><text x="0" y="1.500" font-size="10" text-anchor="middle" fill="#111" stroke="#111" stroke-width=".35" font-family="Liberation Sans,sans-serif" textLength="9" lengthAdjust="spacingAndGlyphs">10</text><path d="M-5.500 6 H-1 M1 6 H5.500" stroke="#0a3a8a" stroke-width="1.300"/><path d="M-6.500 6 l2.200 -1.800 v3.600Z M6.500 6 l-2.200 -1.800 v3.600Z" fill="#0a3a8a"/></g><g transform="translate(60 273.1)"><text x="0" y="1.500" font-size="10" text-anchor="middle" fill="#111" stroke="#111" stroke-width=".35" font-family="Liberation Sans,sans-serif" textLength="4.2" lengthAdjust="spacingAndGlyphs">1</text><path d="M-5.500 6 H-1 M1 6 H5.500" stroke="#0a3a8a" stroke-width="1.300"/><path d="M-6.500 6 l2.200 -1.800 v3.600Z M6.500 6 l-2.200 -1.800 v3.600Z" fill="#0a3a8a"/></g><g transform="translate(84.5 102.5) scale(1.08)"><path d="M-6 6 L4.500 -6 M-2.500 6.500 L7 -4.500" stroke="#444" stroke-width="1"/></g><g transform="translate(84.5 124.0) scale(1.08)"><path d="M-5.500 6 Q-7.500 -6 4 -6.500 Q7 -6 6.500 -3 Q-3.500 -4.500 -2.500 5.500" fill="#f4f4f0" stroke="#333" stroke-width="1"/></g><g transform="translate(84.5 145.4) scale(1.08)"><path d="M-5 -5 H1 V-1.500 L6 -4.500 V1 L1 1 V6 H-5Z" fill="#9cc4ee" stroke="#1a3a7a" stroke-width="1.100"/><path d="M-4 -4 H0 L-4 2Z" fill="#d4e6fa"/></g><g transform="translate(84.5 166.8) scale(1.08)"><ellipse cx="0" cy="0" rx="7.500" ry="4" fill="#b4d2f4" stroke="#1a3a7a" stroke-width="1.100"/><ellipse cx="-1.500" cy="-1" rx="3.500" ry="1.500" fill="#e4f0fc"/></g><g transform="translate(84.5 188.3) scale(1.08)"><rect x="-7" y="-4.500" width="14" height="9" fill="#a4c8f0" stroke="#1a3a7a" stroke-width="1.200"/><path d="M-6 -3.500 H4 L-6 3.500Z" fill="#dcebfb"/></g><g transform="translate(84.5 209.8) scale(1.08)"><path d="M-4 -5 H1 L3 -3 V0 L6 2 L3 6 H-3 L-1 2 L-5 0Z" fill="#b0ad9e"/><circle cx="-1" cy="-2" r="1.800" fill="#c8c5b6"/></g><g transform="translate(84.5 231.2) scale(1.08)"><path d="M-6.500 7 V-2 L-5 -6 H-3 L-1.500 -2 V7Z M1.500 7 V-2 L3 -6 H5 L6.500 -2 V7Z" fill="#b0ad9e"/><path d="M-1.500 1 H1.500" stroke="#b0ad9e" stroke-width="1.200"/></g><g transform="translate(84.5 252.7) scale(1.08)"><rect x="-7" y="-7" width="14" height="14" fill="#b4b1a2"/><path d="M-7 7 L7 -7 V-2 L-2 7Z" fill="#dedbcc"/><path d="M-5 3 L4 -6" stroke="#ECE9D8" stroke-width=".8" stroke-dasharray="1 1"/></g><g transform="translate(84.5 274.1) scale(1.08)"><rect x="-7" y="-7" width="14" height="14" fill="#b4b1a2"/><path d="M-5 -3 l3 -2 M-1 -2 l3 -2 M3 -2 l3 -2 M-5 2 l3 -2 M-1 3 l3 -2 M3 3 l3 -2 M-4 6 l3 -2" stroke="#d8d5c6" stroke-width="1"/></g></svg>
<div class="" style="left:808px;top:91px;width:192px;height:401px;background:#ECE9D8;border-left:1px solid #fff;border-top:1px solid #fff;border-bottom:1px solid #fff;"></div>
<div class="" style="left:804.5px;top:91px;width:3.5px;height:401px;background:linear-gradient(90deg,#fbfaf4,#f1efe2);"></div>
<div class="btn" style="left:812px;top:94px;width:11px;height:12px;border-color:#5f7f9c;"></div>
<div class="btn" style="left:824px;top:94px;width:18px;height:12px;border-color:#5f7f9c;"></div>
<div class="btn" style="left:843px;top:94px;width:29px;height:12px;border-color:#5f7f9c;"></div>
<svg style="left:812px;top:94px" width="32" height="12" viewBox="0 0 32 12" fill="none" stroke="#444" stroke-width="1"><path d="M3 5.5 L5.5 3 L8 5.5 M3 9 L5.5 6.5 L8 9"/><path d="M15.5 3.500 L18 6 L15.5 8.500 M18 3.500 L20.5 6 L18 8.500 M25.5 3.500 L23 6 L25.5 8.500 M28 3.500 L25.5 6 L28 8.500"/></svg>
<span class="t" style="left:845.5px;top:95.5px;font-size:9.5px;color:#111;letter-spacing:0;transform-origin:0 0;transform:scaleX(0.824);">Locate</span>
<span class="t" style="left:881.5px;top:95.5px;font-size:9.5px;color:#111;letter-spacing:0;font-weight:bold;transform-origin:0 0;transform:scaleX(0.946);">#</span>
<span class="t" style="left:897.5px;top:95.5px;font-size:9.5px;color:#111;letter-spacing:0;transform-origin:0 0;transform:scaleX(0.838);">Object</span>
<span class="t" style="left:925px;top:95.5px;font-size:9.5px;color:#111;letter-spacing:0;transform-origin:0 0;transform:scaleX(0.874);">Type</span>
<span class="t" style="left:948.5px;top:95.5px;font-size:9.5px;color:#111;letter-spacing:0;transform-origin:0 0;transform:scaleX(0.858);">Stitches</span>
<div class="" style="left:987px;top:94px;width:11px;height:12px;background:#f3f1e8;border-right:1px solid #8a8878;border-bottom:1px solid #8a8878;border-top:1px solid #fff;border-left:1px solid #fff;"></div>
<svg style="left:987px;top:94px" width="11" height="12" viewBox="0 0 11 12"><path d="M2.5 3 L8 9 M8 3 L2.5 9" stroke="#000" stroke-width="1.8"/></svg>
<div class="" style="left:815px;top:109px;width:167px;height:376px;background:#C3C3C3;border-left:1px solid #777;border-top:1px solid #777;"></div>
<div class="" style="left:816px;top:110px;width:5px;height:375px;background:#C9C9C9;"></div>
<svg style="left:0;top:0" width="1000" height="540" viewBox="0 0 1000 540"><defs><pattern id="hat" width="3.11" height="3.11" patternUnits="userSpaceOnUse" patternTransform="rotate(45)"><rect width="3.11" height="3.11" fill="#C8C8C8"/><rect width="3.11" height="0.85" fill="#2e2e2e"/></pattern><clipPath id="lc"><rect x="816" y="110" width="166" height="375"/></clipPath></defs><g clip-path="url(#lc)"><rect x="897.5" y="108" width="26" height="208.3" fill="url(#hat)"/><path d="M822 133.0 H982 M822 159.4 H982 M822 185.7 H982 M822 212.0 H982 M822 238.3 H982 M822 264.7 H982 M822 291.0 H982 M822 317.3 H982 M822 343.7 H982 M822 370.0 H982 M822 396.3 H982 M822 422.7 H982 M822 449.0 H982 M822 475.3 H982 M874 109 V485 M897 109 V485 M924 109 V485 M946.5 109 V485" stroke="#bababa" stroke-width="1" fill="none"/><path d="M821.5 109 V432.2" stroke="#8a8a8a" stroke-width="1"/><path d="M822.5 109 V485" stroke="#cdcdcd" stroke-width="1"/><path d="M845.5 109 V304.3" stroke="#777" stroke-width="1"/><path d="M845.5 120.0 H856" stroke="#858585" stroke-width=".9"/><path d="M845.5 146.3 H856" stroke="#858585" stroke-width=".9"/><path d="M845.5 172.7 H856" stroke="#858585" stroke-width=".9"/><path d="M845.5 199.0 H856" stroke="#858585" stroke-width=".9"/><path d="M845.5 225.3 H856" stroke="#858585" stroke-width=".9"/><path d="M845.5 251.6 H856" stroke="#858585" stroke-width=".9"/><path d="M845.5 278.0 H856" stroke="#858585" stroke-width=".9"/><path d="M845.5 304.3 H856" stroke="#858585" stroke-width=".9"/><path d="M857 123 L864 115" stroke="#fff" stroke-width="1.1"/><path d="M858 149 L862 142" stroke="#fff" stroke-width="1.1"/><path d="M859.5 168 L859.5 176" stroke="#fff" stroke-width="1.1"/><path d="M859 194 L860 203" stroke="#fff" stroke-width="1.1"/><path d="M857 226 L864 224" stroke="#fff" stroke-width="1.1"/><path d="M858 251 L862 250.5" stroke="#fff" stroke-width="1.1"/><path d="M857 278 L864 276" stroke="#fff" stroke-width="1.1"/><path d="M858 304.5 L861 304.5" stroke="#fff" stroke-width="1.1"/><g stroke="#1fae1f" stroke-width="1.1"><path d="M898.5 110.2 l5 5 m0 -5 l-5 5 m2.5 -6 v7 m-3.5 -3.5 h7"/></g><rect x="900" y="111.7" width="2" height="2" fill="#dfffdf"/><path d="M903.3 117.7 V126.2" stroke="#222" stroke-width="1"/><path d="M903.3 122.2 L910.5 113.4 L916.7 113.7 L916.7 122.9 L910.5 122.7 L908 117.7 L910.5 113.4" fill="none" stroke="#111" stroke-width="1"/><circle cx="903.3" cy="117.7" r="1.4" fill="#c01020"/><circle cx="903.3" cy="126.0" r="1.4" fill="#c01020"/><circle cx="910.5" cy="113.4" r="1.2" fill="#e8e8a0" stroke="#111" stroke-width=".6"/><circle cx="916.7" cy="113.7" r="1.2" fill="#e8e8a0" stroke="#111" stroke-width=".6"/><rect x="915.6" y="121.8" width="2.2" height="2.2" fill="#333"/><circle cx="910.5" cy="122.7" r="1.2" fill="#e8e8a0" stroke="#111" stroke-width=".6"/><path d="M929.5 115.7 V124.2 q1.2 1.6 2.4 0 V115.7 q1.2 -1.6 2.4 0 V124.2 q1.2 1.6 2.4 0 V115.7 q1.1 -1.4 2.2 0 V124.7" fill="none" stroke="#222" stroke-width="1"/><g stroke="#1fae1f" stroke-width="1.1"><path d="M898.5 136.53 l5 5 m0 -5 l-5 5 m2.5 -6 v7 m-3.5 -3.5 h7"/></g><rect x="900" y="138.0" width="2" height="2" fill="#dfffdf"/><path d="M903.3 152.2 L916 139.4" stroke="#d03048" stroke-width=".9"/><rect x="902" y="151.0" width="2.5" height="2.5" fill="#d8d8b0" stroke="#111" stroke-width=".7"/><rect x="914.8" y="138.2" width="2.5" height="2.5" fill="#d8d8b0" stroke="#111" stroke-width=".7"/><path d="M930.5 150.8 L939.2 142.5" stroke="#6e2c2c" stroke-width="1.1"/><path d="M933.8 145.3 l2.4 2.4" stroke="#444" stroke-width=".9"/><g stroke="#1fae1f" stroke-width="1.1"><path d="M898.5 162.86 l5 5 m0 -5 l-5 5 m2.5 -6 v7 m-3.5 -3.5 h7"/></g><rect x="900" y="164.4" width="2" height="2" fill="#dfffdf"/><path d="M903.3 170.4 V178.9" stroke="#222" stroke-width="1"/><path d="M903.3 174.9 L910.5 166.1 L916.7 166.4 L916.7 175.6 L910.5 175.4 L908 170.4 L910.5 166.1" fill="none" stroke="#111" stroke-width="1"/><circle cx="903.3" cy="170.4" r="1.4" fill="#c01020"/><circle cx="903.3" cy="178.7" r="1.4" fill="#c01020"/><circle cx="910.5" cy="166.1" r="1.2" fill="#e8e8a0" stroke="#111" stroke-width=".6"/><circle cx="916.7" cy="166.4" r="1.2" fill="#e8e8a0" stroke="#111" stroke-width=".6"/><rect x="915.6" y="174.5" width="2.2" height="2.2" fill="#333"/><circle cx="910.5" cy="175.4" r="1.2" fill="#e8e8a0" stroke="#111" stroke-width=".6"/><path d="M929.5 168.4 V176.9 q1.2 1.6 2.4 0 V168.4 q1.2 -1.6 2.4 0 V176.9 q1.2 1.6 2.4 0 V168.4 q1.1 -1.4 2.2 0 V177.4" fill="none" stroke="#222" stroke-width="1"/><g stroke="#1fae1f" stroke-width="1.1"><path d="M898.5 189.19 l5 5 m0 -5 l-5 5 m2.5 -6 v7 m-3.5 -3.5 h7"/></g><rect x="900" y="190.7" width="2" height="2" fill="#dfffdf"/><path d="M903.3 204.9 L916 192.1" stroke="#d03048" stroke-width=".9"/><rect x="902" y="203.7" width="2.5" height="2.5" fill="#d8d8b0" stroke="#111" stroke-width=".7"/><rect x="914.8" y="190.9" width="2.5" height="2.5" fill="#d8d8b0" stroke="#111" stroke-width=".7"/><path d="M930.5 203.5 L939.2 195.2" stroke="#6e2c2c" stroke-width="1.1"/><path d="M933.8 198.0 l2.4 2.4" stroke="#444" stroke-width=".9"/><g stroke="#1fae1f" stroke-width="1.1"><path d="M898.5 215.51999999999998 l5 5 m0 -5 l-5 5 m2.5 -6 v7 m-3.5 -3.5 h7"/></g><rect x="900" y="217.0" width="2" height="2" fill="#dfffdf"/><path d="M903.3 223.0 V231.5" stroke="#222" stroke-width="1"/><path d="M903.3 227.5 L910.5 218.7 L916.7 219.0 L916.7 228.2 L910.5 228.0 L908 223.0 L910.5 218.7" fill="none" stroke="#111" stroke-width="1"/><circle cx="903.3" cy="223.0" r="1.4" fill="#c01020"/><circle cx="903.3" cy="231.3" r="1.4" fill="#c01020"/><circle cx="910.5" cy="218.7" r="1.2" fill="#e8e8a0" stroke="#111" stroke-width=".6"/><circle cx="916.7" cy="219.0" r="1.2" fill="#e8e8a0" stroke="#111" stroke-width=".6"/><rect x="915.6" y="227.1" width="2.2" height="2.2" fill="#333"/><circle cx="910.5" cy="228.0" r="1.2" fill="#e8e8a0" stroke="#111" stroke-width=".6"/><path d="M929.5 221.0 V229.5 q1.2 1.6 2.4 0 V221.0 q1.2 -1.6 2.4 0 V229.5 q1.2 1.6 2.4 0 V221.0 q1.1 -1.4 2.2 0 V230.0" fill="none" stroke="#222" stroke-width="1"/><g stroke="#1fae1f" stroke-width="1.1"><path d="M898.5 241.84999999999997 l5 5 m0 -5 l-5 5 m2.5 -6 v7 m-3.5 -3.5 h7"/></g><rect x="900" y="243.3" width="2" height="2" fill="#dfffdf"/><path d="M903.3 257.5 L916 244.7" stroke="#d03048" stroke-width=".9"/><rect x="902" y="256.3" width="2.5" height="2.5" fill="#d8d8b0" stroke="#111" stroke-width=".7"/><rect x="914.8" y="243.5" width="2.5" height="2.5" fill="#d8d8b0" stroke="#111" stroke-width=".7"/><path d="M930.5 256.1 L939.2 247.8" stroke="#6e2c2c" stroke-width="1.1"/><path d="M933.8 250.6 l2.4 2.4" stroke="#444" stroke-width=".9"/><g stroke="#1fae1f" stroke-width="1.1"><path d="M898.5 268.18 l5 5 m0 -5 l-5 5 m2.5 -6 v7 m-3.5 -3.5 h7"/></g><rect x="900" y="269.7" width="2" height="2" fill="#dfffdf"/><path d="M903.3 275.7 V284.2" stroke="#222" stroke-width="1"/><path d="M903.3 280.2 L910.5 271.4 L916.7 271.7 L916.7 280.9 L910.5 280.7 L908 275.7 L910.5 271.4" fill="none" stroke="#111" stroke-width="1"/><circle cx="903.3" cy="275.7" r="1.4" fill="#c01020"/><circle cx="903.3" cy="284.0" r="1.4" fill="#c01020"/><circle cx="910.5" cy="271.4" r="1.2" fill="#e8e8a0" stroke="#111" stroke-width=".6"/><circle cx="916.7" cy="271.7" r="1.2" fill="#e8e8a0" stroke="#111" stroke-width=".6"/><rect x="915.6" y="279.8" width="2.2" height="2.2" fill="#333"/><circle cx="910.5" cy="280.7" r="1.2" fill="#e8e8a0" stroke="#111" stroke-width=".6"/><path d="M929.5 273.7 V282.2 q1.2 1.6 2.4 0 V273.7 q1.2 -1.6 2.4 0 V282.2 q1.2 1.6 2.4 0 V273.7 q1.1 -1.4 2.2 0 V282.7" fill="none" stroke="#222" stroke-width="1"/><g stroke="#1fae1f" stroke-width="1.1"><path d="M898.5 294.51 l5 5 m0 -5 l-5 5 m2.5 -6 v7 m-3.5 -3.5 h7"/></g><rect x="900" y="296.0" width="2" height="2" fill="#dfffdf"/><path d="M903.3 310.2 L916 297.4" stroke="#d03048" stroke-width=".9"/><rect x="902" y="309.0" width="2.5" height="2.5" fill="#d8d8b0" stroke="#111" stroke-width=".7"/><rect x="914.8" y="296.2" width="2.5" height="2.5" fill="#d8d8b0" stroke="#111" stroke-width=".7"/><path d="M930.5 308.8 L939.2 300.5" stroke="#6e2c2c" stroke-width="1.1"/><path d="M933.8 303.3 l2.4 2.4" stroke="#444" stroke-width=".9"/><path d="M904 336.3 L916.5 324.1" stroke="#d04868" stroke-width="1.2" stroke-dasharray="1.8 .9"/><rect x="902.700" y="335.1" width="2.500" height="2.500" fill="#e8e070" stroke="#222" stroke-width=".7"/><circle cx="916.800" cy="323.8" r="1.500" fill="#c8a838" stroke="#333" stroke-width=".7"/><path d="M930.5 335.1 L939.2 326.8" stroke="#6e2c2c" stroke-width="1.1"/><path d="M933.8 329.6 l2.4 2.4" stroke="#444" stroke-width=".9"/><path d="M904 362.7 L916.5 350.5" stroke="#d04868" stroke-width="1.2" stroke-dasharray="1.8 .9"/><rect x="902.700" y="361.5" width="2.500" height="2.500" fill="#e8e070" stroke="#222" stroke-width=".7"/><circle cx="916.800" cy="350.2" r="1.500" fill="#c8a838" stroke="#333" stroke-width=".7"/><path d="M930.5 361.5 L939.2 353.2" stroke="#6e2c2c" stroke-width="1.1"/><path d="M933.8 356.0 l2.4 2.4" stroke="#444" stroke-width=".9"/><path d="M904 389.0 L916.5 376.8" stroke="#d04868" stroke-width="1.2" stroke-dasharray="1.8 .9"/><rect x="902.700" y="387.8" width="2.500" height="2.500" fill="#e8e070" stroke="#222" stroke-width=".7"/><circle cx="916.800" cy="376.5" r="1.500" fill="#c8a838" stroke="#333" stroke-width=".7"/><path d="M930.5 387.8 L939.2 379.5" stroke="#6e2c2c" stroke-width="1.1"/><path d="M933.8 382.3 l2.4 2.4" stroke="#444" stroke-width=".9"/><path d="M904 415.3 L916.5 403.1" stroke="#d04868" stroke-width="1.2" stroke-dasharray="1.8 .9"/><rect x="902.700" y="414.1" width="2.500" height="2.500" fill="#e8e070" stroke="#222" stroke-width=".7"/><circle cx="916.800" cy="402.8" r="1.500" fill="#c8a838" stroke="#333" stroke-width=".7"/><path d="M930.5 414.1 L939.2 405.8" stroke="#6e2c2c" stroke-width="1.1"/><path d="M933.8 408.6 l2.4 2.4" stroke="#444" stroke-width=".9"/><path d="M904 441.7 L916.5 429.5" stroke="#d04868" stroke-width="1.2" stroke-dasharray="1.8 .9"/><rect x="902.700" y="440.5" width="2.500" height="2.500" fill="#e8e070" stroke="#222" stroke-width=".7"/><circle cx="916.800" cy="429.2" r="1.500" fill="#c8a838" stroke="#333" stroke-width=".7"/><path d="M930.5 440.5 L939.2 432.2" stroke="#6e2c2c" stroke-width="1.1"/><path d="M933.8 435.0 l2.4 2.4" stroke="#444" stroke-width=".9"/><path d="M904 468.0 L916.5 455.8" stroke="#d04868" stroke-width="1.2" stroke-dasharray="1.8 .9"/><rect x="902.700" y="466.8" width="2.500" height="2.500" fill="#e8e070" stroke="#222" stroke-width=".7"/><circle cx="916.800" cy="455.5" r="1.500" fill="#c8a838" stroke="#333" stroke-width=".7"/><path d="M930.5 466.8 L939.2 458.5" stroke="#6e2c2c" stroke-width="1.1"/><path d="M933.8 461.3 l2.4 2.4" stroke="#444" stroke-width=".9"/><path d="M843 330.6 H857" stroke="#777" stroke-width="1"/><rect x="827.5" y="323.8" width="14" height="14" fill="#f8d618" stroke="#222" stroke-width="1"/><text x="834.5" y="334.3" font-size="9.8" text-anchor="middle" fill="#222" stroke="#222" stroke-width=".12" font-family="Liberation Sans,sans-serif">9</text><path d="M822 330.6 H827" stroke="#8a8a8a" stroke-width=".9"/><path d="M843 357.0 H857" stroke="#777" stroke-width="1"/><rect x="827.5" y="350.2" width="14" height="14" fill="#f8f820" stroke="#222" stroke-width="1"/><text x="834.5" y="360.7" font-size="9.8" text-anchor="middle" fill="#222" stroke="#222" stroke-width=".12" font-family="Liberation Sans,sans-serif">4</text><path d="M822 357.0 H827" stroke="#8a8a8a" stroke-width=".9"/><path d="M843 383.3 H857" stroke="#777" stroke-width="1"/><rect x="827.5" y="376.5" width="14" height="14" fill="#c01858" stroke="#222" stroke-width="1"/><text x="834.5" y="387.0" font-size="9.8" text-anchor="middle" fill="#fff" stroke="#fff" stroke-width=".12" font-family="Liberation Sans,sans-serif">14</text><path d="M822 383.3 H827" stroke="#8a8a8a" stroke-width=".9"/><path d="M843 409.6 H857" stroke="#777" stroke-width="1"/><rect x="827.5" y="402.8" width="14" height="14" fill="#f088c0" stroke="#222" stroke-width="1"/><text x="834.5" y="413.3" font-size="9.8" text-anchor="middle" fill="#222" stroke="#222" stroke-width=".12" font-family="Liberation Sans,sans-serif">15</text><path d="M822 409.6 H827" stroke="#8a8a8a" stroke-width=".9"/><path d="M843 436.0 H857" stroke="#777" stroke-width="1"/><rect x="827.5" y="429.2" width="14" height="14" fill="#189018" stroke="#222" stroke-width="1"/><text x="834.5" y="439.7" font-size="9.8" text-anchor="middle" fill="#fff" stroke="#fff" stroke-width=".12" font-family="Liberation Sans,sans-serif">1</text><path d="M822 436.0 H827" stroke="#8a8a8a" stroke-width=".9"/><rect x="848.5" y="322.8" width="22.5" height="16" fill="none" stroke="#f0e060" stroke-width="1"/><rect x="848.5" y="348.7" width="22.5" height="16" fill="none" stroke="#f4f440" stroke-width="1"/><rect x="851.5" y="372.0" width="15.5" height="22.5" fill="none" stroke="#c01858" stroke-width="1"/><path d="M852 394.0 H867" stroke="#c01858" stroke-width="1.4" stroke-dasharray="1.5 1"/><rect x="851.5" y="398.8" width="15.5" height="22.5" fill="none" stroke="#f090c0" stroke-width="1"/><path d="M841.5 330.6 H858" stroke="#777" stroke-width="1"/><path d="M841.5 357.0 H858" stroke="#777" stroke-width="1"/><path d="M841.5 383.3 H858" stroke="#777" stroke-width="1"/><path d="M841.5 409.6 H858" stroke="#777" stroke-width="1"/><path d="M841.5 436.0 H870" stroke="#2a9a2a" stroke-width="1"/><rect x="818.5" y="432.2" width="6" height="6" fill="#fff" stroke="#888" stroke-width="1"/><path d="M820 435.2 H823" stroke="#222" stroke-width="1"/><path d="M845.5 443.7 V462.0 H848" stroke="#777" stroke-width="1" fill="none"/><rect x="848" y="451.2" width="23.5" height="23.5" fill="none" stroke="#1010d0" stroke-width="2"/><path d="M859.5 452.0 V474.0" stroke="#40a040" stroke-width="1.2"/><path d="M849 462.5 H859" stroke="#555" stroke-width="1"/></g></svg>
<span class="t" style="left:878.5px;top:114.9px;font-size:10.2px;color:#111;letter-spacing:0;transform-origin:0 0;transform:scaleX(0.799);">522</span>
<span class="t" style="left:878.5px;top:141.2px;font-size:10.2px;color:#111;letter-spacing:0;transform-origin:0 0;transform:scaleX(0.799);">523</span>
<span class="t" style="left:878.5px;top:167.6px;font-size:10.2px;color:#111;letter-spacing:0;transform-origin:0 0;transform:scaleX(0.799);">524</span>
<span class="t" style="left:878.5px;top:193.9px;font-size:10.2px;color:#111;letter-spacing:0;transform-origin:0 0;transform:scaleX(0.799);">525</span>
<span class="t" style="left:878.5px;top:220.2px;font-size:10.2px;color:#111;letter-spacing:0;transform-origin:0 0;transform:scaleX(0.799);">526</span>
<span class="t" style="left:878.5px;top:246.5px;font-size:10.2px;color:#111;letter-spacing:0;transform-origin:0 0;transform:scaleX(0.799);">527</span>
<span class="t" style="left:878.5px;top:272.9px;font-size:10.2px;color:#111;letter-spacing:0;transform-origin:0 0;transform:scaleX(0.799);">528</span>
<span class="t" style="left:878.5px;top:299.2px;font-size:10.2px;color:#111;letter-spacing:0;transform-origin:0 0;transform:scaleX(0.799);">529</span>
<span class="t" style="left:878.5px;top:325.5px;font-size:10.2px;color:#111;letter-spacing:0;transform-origin:0 0;transform:scaleX(0.799);">530</span>
<span class="t" style="left:878.5px;top:351.9px;font-size:10.2px;color:#111;letter-spacing:0;transform-origin:0 0;transform:scaleX(0.799);">531</span>
<span class="t" style="left:878.5px;top:378.2px;font-size:10.2px;color:#111;letter-spacing:0;transform-origin:0 0;transform:scaleX(0.799);">532</span>
<span class="t" style="left:878.5px;top:404.5px;font-size:10.2px;color:#111;letter-spacing:0;transform-origin:0 0;transform:scaleX(0.799);">533</span>
<span class="t" style="left:878.5px;top:430.9px;font-size:10.2px;color:#111;letter-spacing:0;transform-origin:0 0;transform:scaleX(0.799);">534</span>
<span class="t" style="left:878.5px;top:457.2px;font-size:10.2px;color:#111;letter-spacing:0;transform-origin:0 0;transform:scaleX(0.799);">535</span>
<span class="t" style="left:946px;top:114.9px;width:37px;text-align:center;font-size:10.2px;color:#111;letter-spacing:0;transform:scaleX(0.82);">36</span>
<span class="t" style="left:946px;top:141.2px;width:37px;text-align:center;font-size:10.2px;color:#111;letter-spacing:0;transform:scaleX(0.82);">2</span>
<span class="t" style="left:946px;top:167.6px;width:37px;text-align:center;font-size:10.2px;color:#111;letter-spacing:0;transform:scaleX(0.82);">39</span>
<span class="t" style="left:946px;top:193.9px;width:37px;text-align:center;font-size:10.2px;color:#111;letter-spacing:0;transform:scaleX(0.82);">2</span>
<span class="t" style="left:946px;top:220.2px;width:37px;text-align:center;font-size:10.2px;color:#111;letter-spacing:0;transform:scaleX(0.82);">16</span>
<span class="t" style="left:946px;top:246.5px;width:37px;text-align:center;font-size:10.2px;color:#111;letter-spacing:0;transform:scaleX(0.82);">2</span>
<span class="t" style="left:946px;top:272.9px;width:37px;text-align:center;font-size:10.2px;color:#111;letter-spacing:0;transform:scaleX(0.82);">14</span>
<span class="t" style="left:946px;top:299.2px;width:37px;text-align:center;font-size:10.2px;color:#111;letter-spacing:0;transform:scaleX(0.82);">2</span>
<span class="t" style="left:946px;top:325.5px;width:37px;text-align:center;font-size:10.2px;color:#111;letter-spacing:0;transform:scaleX(0.82);">400</span>
<span class="t" style="left:946px;top:351.9px;width:37px;text-align:center;font-size:10.2px;color:#111;letter-spacing:0;transform:scaleX(0.82);">400</span>
<span class="t" style="left:946px;top:378.2px;width:37px;text-align:center;font-size:10.2px;color:#111;letter-spacing:0;transform:scaleX(0.82);">400</span>
<span class="t" style="left:946px;top:404.5px;width:37px;text-align:center;font-size:10.2px;color:#111;letter-spacing:0;transform:scaleX(0.82);">400</span>
<span class="t" style="left:946px;top:430.9px;width:37px;text-align:center;font-size:10.2px;color:#111;letter-spacing:0;transform:scaleX(0.82);">333</span>
<span class="t" style="left:946px;top:457.2px;width:37px;text-align:center;font-size:10.2px;color:#111;letter-spacing:0;transform:scaleX(0.82);">333</span>
<div class="" style="left:982px;top:109px;width:12px;height:376px;background:linear-gradient(90deg,#eeeeea,#ffffff 60%,#f4f4f2);"></div>
<div class="" style="left:983px;top:110px;width:11px;height:11px;background:#c6d5fb;border-radius:2px;"></div>
<div class="" style="left:983px;top:473px;width:11px;height:11px;background:#c6d5fb;border-radius:2px;"></div>
<div class="" style="left:983px;top:463px;width:11px;height:10px;background:linear-gradient(90deg,#c9d7fc,#d6e0fd 50%,#bccbf5);border-radius:2px;"></div>
<svg style="left:0;top:0" width="1000" height="540" viewBox="0 0 1000 540" fill="none" stroke="#3a55a0" stroke-width="1.6"><path d="M985.5 117.5 L988.5 114.5 L991.5 117.5"/><path d="M985.5 476.5 L988.5 479.5 L991.5 476.5"/></svg>
<div class="" style="left:809px;top:485px;width:191px;height:6px;background:#ECE9D8;"></div>
<div class="" style="left:0px;top:491px;width:808px;height:1px;background:#fff;"></div>
<div class="" style="left:0px;top:492px;width:1000px;height:21px;background:#ECE9D8;"></div>
<div class="" style="left:2px;top:494px;width:1px;height:17px;background:#c5c2b2;"></div>
<div class="fld" style="left:5px;top:493px;width:73px;height:16px;"></div>
<div class="" style="left:66px;top:494px;width:11px;height:14px;background:#c6d5fb;border-radius:1.5px;"></div>
<svg style="left:66px;top:494px" width="11" height="14" viewBox="0 0 11 14" fill="none" stroke="#3a55a0" stroke-width="1.7"><path d="M2.5 5.5 L5.5 8.5 L8.5 5.5"/></svg>
<span class="t" style="left:8.7px;top:496.3px;font-size:9.6px;color:#111;letter-spacing:0;transform-origin:0 0;transform:scaleX(0.771);">Colorway 1</span>
<svg style="left:82px;top:496px" width="10" height="10" viewBox="0 0 10 10"><rect width="10" height="10" fill="#111"/><rect x="0.5" y="0.5" width="2.5" height="2.5" fill="#e02020"/><rect x="3.8" y="0.5" width="2.5" height="2.5" fill="#f0f020"/><rect x="7" y="0.5" width="2.5" height="2.5" fill="#20c020"/><rect x="0.5" y="3.8" width="2.5" height="2.5" fill="#e020e0"/><rect x="3.8" y="3.8" width="2.5" height="2.5" fill="#209020"/><rect x="7" y="3.8" width="2.5" height="2.5" fill="#20e0e0"/><rect x="0.5" y="7" width="2.5" height="2.5" fill="#202020"/><rect x="3.8" y="7" width="2.5" height="2.5" fill="#903020"/><rect x="7" y="7" width="2.5" height="2.5" fill="#2020e0"/></svg>
<div class="" style="left:97px;top:494px;width:2px;height:17px;background:#c8c5b5;border-right:1px solid rgba(255,255,255,.75);"></div>
<div class="" style="left:102.5px;top:494px;width:27px;height:15px;border:1.5px solid #5a7fb8;border-radius:3px;background:linear-gradient(#fff,#f0f0ea);"></div>
<span class="t" style="left:108px;top:496.8px;font-size:9.6px;color:#222;letter-spacing:0;transform-origin:0 0;transform:scaleX(0.789);text-shadow:0.3px 0 0 #222;">BKG</span>
<svg style="left:133px;top:497px" width="6" height="9" viewBox="0 0 6 9"><path d="M5 0.5 L1 4.5 L5 8.5 Z" fill="#b8b5a5"/></svg>
<div class="" style="left:139.5px;top:494px;width:13px;height:13px;background:#189018;border:1px solid rgba(0,0,0,.25);"></div>
<span class="t" style="left:139.5px;top:496px;width:13px;text-align:center;font-size:9.5px;color:#fff;letter-spacing:0;transform:scaleX(0.85);">1</span>
<div class="" style="left:140.0px;top:508.5px;width:12px;height:2px;background:#1a1ab0;"></div>
<div class="" style="left:154.9px;top:494px;width:13px;height:13px;background:#f4f4f4;border:1px solid #8a8a8a;"></div>
<span class="t" style="left:154.9px;top:496px;width:13px;text-align:center;font-size:9.5px;color:#111;letter-spacing:0;transform:scaleX(0.85);">2</span>
<div class="" style="left:155.4px;top:508.5px;width:12px;height:2px;background:#1a1ab0;"></div>
<div class="" style="left:170.4px;top:494px;width:13px;height:13px;background:#e01828;border:1px solid rgba(0,0,0,.25);"></div>
<span class="t" style="left:170.4px;top:496px;width:13px;text-align:center;font-size:9.5px;color:#fff;letter-spacing:0;transform:scaleX(0.85);">3</span>
<div class="" style="left:170.9px;top:508.5px;width:12px;height:2px;background:#1a1ab0;"></div>
<div class="" style="left:185.8px;top:494px;width:13px;height:13px;background:#f8f018;border:1px solid rgba(0,0,0,.25);"></div>
<span class="t" style="left:185.8px;top:496px;width:13px;text-align:center;font-size:9.5px;color:#222;letter-spacing:0;transform:scaleX(0.85);">4</span>
<div class="" style="left:186.3px;top:508.5px;width:12px;height:2px;background:#1a1ab0;"></div>
<div class="" style="left:201.3px;top:494px;width:13px;height:13px;background:#20f0f0;border:1px solid rgba(0,0,0,.25);"></div>
<span class="t" style="left:201.3px;top:496px;width:13px;text-align:center;font-size:9.5px;color:#222;letter-spacing:0;transform:scaleX(0.85);">5</span>
<div class="" style="left:216.8px;top:494px;width:13px;height:13px;background:#e09818;border:1px solid rgba(0,0,0,.25);"></div>
<span class="t" style="left:216.8px;top:496px;width:13px;text-align:center;font-size:9.5px;color:#222;letter-spacing:0;transform:scaleX(0.85);">6</span>
<div class="" style="left:217.2px;top:508.5px;width:12px;height:2px;background:#1a1ab0;"></div>
<div class="" style="left:232.2px;top:494px;width:13px;height:13px;background:#20e020;border:1px solid rgba(0,0,0,.25);"></div>
<span class="t" style="left:232.2px;top:496px;width:13px;text-align:center;font-size:9.5px;color:#222;letter-spacing:0;transform:scaleX(0.85);">7</span>
<div class="" style="left:247.6px;top:494px;width:13px;height:13px;background:#58a858;border:1px solid rgba(0,0,0,.25);"></div>
<span class="t" style="left:247.6px;top:496px;width:13px;text-align:center;font-size:9.5px;color:#222;letter-spacing:0;transform:scaleX(0.85);">8</span>
<div class="" style="left:248.1px;top:508.5px;width:12px;height:2px;background:#1a1ab0;"></div>
<div class="" style="left:263.1px;top:494px;width:13px;height:13px;background:#f0d020;border:1px solid rgba(0,0,0,.25);"></div>
<span class="t" style="left:263.1px;top:496px;width:13px;text-align:center;font-size:9.5px;color:#222;letter-spacing:0;transform:scaleX(0.85);">9</span>
<div class="" style="left:263.6px;top:508.5px;width:12px;height:2px;background:#1a1ab0;"></div>
<div class="" style="left:278.5px;top:494px;width:13px;height:13px;background:#189080;border:1px solid rgba(0,0,0,.25);"></div>
<span class="t" style="left:278.5px;top:496px;width:13px;text-align:center;font-size:9.5px;color:#fff;letter-spacing:0;transform:scaleX(0.85);">10</span>
<div class="" style="left:279.0px;top:508.5px;width:12px;height:2px;background:#1a1ab0;"></div>
<div class="" style="left:294.0px;top:494px;width:13px;height:13px;background:#103088;border:1px solid rgba(0,0,0,.25);"></div>
<span class="t" style="left:294.0px;top:496px;width:13px;text-align:center;font-size:9.5px;color:#fff;letter-spacing:0;transform:scaleX(0.85);">11</span>
<div class="" style="left:294.5px;top:508.5px;width:12px;height:2px;background:#1a1ab0;"></div>
<div class="" style="left:309.4px;top:494px;width:13px;height:13px;background:#505050;border:1px solid rgba(0,0,0,.25);"></div>
<span class="t" style="left:309.4px;top:496px;width:13px;text-align:center;font-size:9.5px;color:#fff;letter-spacing:0;transform:scaleX(0.85);">12</span>
<div class="" style="left:309.9px;top:508.5px;width:12px;height:2px;background:#1a1ab0;"></div>
<div class="" style="left:324.9px;top:494px;width:13px;height:13px;background:#1858a8;border:1px solid rgba(0,0,0,.25);"></div>
<span class="t" style="left:324.9px;top:496px;width:13px;text-align:center;font-size:9.5px;color:#fff;letter-spacing:0;transform:scaleX(0.85);">13</span>
<div class="" style="left:325.4px;top:508.5px;width:12px;height:2px;background:#1a1ab0;"></div>
<div class="" style="left:340.4px;top:494px;width:13px;height:13px;background:#c01858;border:1px solid rgba(0,0,0,.25);"></div>
<span class="t" style="left:340.4px;top:496px;width:13px;text-align:center;font-size:9.5px;color:#fff;letter-spacing:0;transform:scaleX(0.85);">14</span>
<div class="" style="left:340.9px;top:508.5px;width:12px;height:2px;background:#1a1ab0;"></div>
<div class="" style="left:355.8px;top:494px;width:13px;height:13px;background:#f080c0;border:1px solid rgba(0,0,0,.25);"></div>
<span class="t" style="left:355.8px;top:496px;width:13px;text-align:center;font-size:9.5px;color:#222;letter-spacing:0;transform:scaleX(0.85);">15</span>
<div class="" style="left:356.3px;top:508.5px;width:12px;height:2px;background:#1a1ab0;"></div>
<svg style="left:0;top:0" width="1000" height="540" viewBox="0 0 1000 540"><path d="M371.5 497 L376 501 L371.5 505 Z" fill="#111"/><path d="M388.5 501 H397 M392.7 496.8 V505.2 M405.5 501 H414" stroke="#222" stroke-width="1.1"/><g><rect x="421" y="497" width="10" height="6" fill="#7030a0"/><rect x="421" y="497" width="3" height="6" fill="#e0c020"/><rect x="427" y="497" width="3" height="6" fill="#2050c0"/><path d="M420 503 H432 L433.5 506 H420 Z" fill="#222"/></g><path d="M439 497 L447 506 M447 497 L439 506 M439 497 H444" stroke="#333" stroke-width="1" fill="none"/><g><rect x="462" y="496.5" width="4.5" height="1.6" fill="#20a020"/><rect x="462" y="498.3" width="4.5" height="1.6" fill="#20d0d0"/><rect x="462" y="500.1" width="4.5" height="1.6" fill="#2040e0"/><rect x="462" y="501.9" width="4.5" height="1.6" fill="#e02020"/><rect x="462" y="503.7" width="4.5" height="1.6" fill="#e0c020"/><rect x="462" y="505.5" width="4.5" height="1.4" fill="#111"/><rect x="467.3" y="496.5" width="4.5" height="10.4" fill="#858585"/></g><g><rect x="485.5" y="496" width="11" height="11" fill="#1a2a6a"/><rect x="487" y="497.5" width="8" height="8" fill="#c8d0e0"/><circle cx="491" cy="501" r="2.6" fill="#402020"/><path d="M486 507 L489 501 L492 507Z" fill="#c02020"/></g><g><rect x="503" y="496.5" width="9.5" height="10.5" fill="#101830"/><rect x="505" y="497.5" width="5.5" height="5" fill="#c8d0e8"/><rect x="506" y="503.5" width="3.5" height="3" fill="#4060c0"/><path d="M507 498 L508.5 502" stroke="#c02020" stroke-width="1"/></g><g><rect x="525.5" y="496" width="10" height="11" fill="#f8f8f8"/><path d="M527.5 498.5 H533 M527.5 501.5 H532 M527.5 504.5 H533 M527.5 497 V506" stroke="#8a8a8a" stroke-width="1.6" fill="none"/></g><g fill="#d8d8e8" stroke="#404060" stroke-width="1"><path d="M549.5 496.5 L545 506 H549.5 Z"/><path d="M551.5 496.5 L556 506 H551.5 Z"/><path d="M571 496.5 L561.5 501 L571 501 Z"/><path d="M571 502.5 L561.5 502.5 L571 506.5 Z"/></g><g fill="none" stroke="#223" stroke-width="1"><path d="M585 504 L590 498 L595.5 504"/><path d="M584 503.5 L586 501 M584 503.5 L587 504"/><path d="M601.5 504 L606.5 498 L611.5 504"/><path d="M612.5 503.5 L610.5 501 M612.5 503.5 L609.5 504"/><path d="M584.5 505 H596 M601 505 H612" stroke="#3030c0"/></g><g fill="none" stroke="#222" stroke-width="1.2"><path d="M619.5 500 A3.6 3.6 0 1 0 623 497.4"/><path d="M618 497 L619.5 500.5 L622.5 499" stroke-width="1"/></g><text x="657" y="503" font-size="8" fill="#222" font-family="Liberation Sans,sans-serif">°</text><text x="707.5" y="503" font-size="8" fill="#222" font-family="Liberation Sans,sans-serif">°</text><g fill="none" stroke-width="1"><rect x="667.5" y="497.5" width="5" height="9" stroke="#667"/><path d="M670.5 506.5 L673.5 497.5 H678 L675.5 506.5 Z" stroke="#20c8d8"/></g></svg>
<div class="" style="left:381px;top:494px;width:2px;height:17px;background:#c8c5b5;border-right:1px solid rgba(255,255,255,.75);"></div>
<div class="" style="left:454.5px;top:494px;width:2px;height:17px;background:#c8c5b5;border-right:1px solid rgba(255,255,255,.75);"></div>
<div class="" style="left:479.5px;top:494px;width:2px;height:17px;background:#c8c5b5;border-right:1px solid rgba(255,255,255,.75);"></div>
<div class="" style="left:518.5px;top:494px;width:2px;height:17px;background:#c8c5b5;border-right:1px solid rgba(255,255,255,.75);"></div>
<div class="" style="left:539.5px;top:494px;width:2px;height:17px;background:#c8c5b5;border-right:1px solid rgba(255,255,255,.75);"></div>
<div class="" style="left:577px;top:494px;width:2px;height:17px;background:#c8c5b5;border-right:1px solid rgba(255,255,255,.75);"></div>
<div class="" style="left:716.5px;top:494px;width:2px;height:17px;background:#c8c5b5;border-right:1px solid rgba(255,255,255,.75);"></div>
<div class="fld" style="left:630px;top:496px;width:24.5px;height:12px;"></div>
<span class="t" style="left:640px;top:498px;font-size:9.5px;color:#111;letter-spacing:0;transform-origin:0 0;transform:scaleX(0.83);">0</span>
<div class="fld" style="left:681px;top:496px;width:24px;height:12px;"></div>
<span class="t" style="left:691px;top:498px;font-size:9.5px;color:#111;letter-spacing:0;transform-origin:0 0;transform:scaleX(0.83);">0</span>
<div class="" style="left:0px;top:512.5px;width:808px;height:1px;background:#c9c6b6;"></div>
<div class="" style="left:0px;top:513.5px;width:808px;height:1px;background:#fff;"></div>
<div class="" style="left:0px;top:514.5px;width:808px;height:13px;background:#ECE9D8;"></div>
<div class="" style="left:0px;top:527px;width:808px;height:1px;background:#c9c6b6;"></div>
<div class="" style="left:0px;top:528px;width:808px;height:1px;background:#fff;"></div>
<div class="" style="left:0px;top:529px;width:808px;height:11px;background:#ECE9D8;"></div>
<span class="t" style="left:6.5px;top:516.3px;font-size:9.6px;color:#111;letter-spacing:0;transform-origin:0 0;transform:scaleX(0.805);">13439</span>
<span class="t" style="left:43px;top:516.3px;font-size:9.6px;color:#111;letter-spacing:0;transform-origin:0 0;transform:scaleX(0.833);">X=</span>
<span class="t" style="left:59.5px;top:516.3px;font-size:9.6px;color:#111;letter-spacing:0;transform-origin:0 0;transform:scaleX(0.830);">0.00</span>
<span class="t" style="left:75.8px;top:516.3px;font-size:9.6px;color:#111;letter-spacing:0;transform-origin:0 0;transform:scaleX(0.849);">Y=</span>
<span class="t" style="left:93.7px;top:516.3px;font-size:9.6px;color:#111;letter-spacing:0;transform-origin:0 0;transform:scaleX(0.846);">6.99</span>
<span class="t" style="left:110.3px;top:516.3px;font-size:9.6px;color:#111;letter-spacing:0;transform-origin:0 0;transform:scaleX(0.886);">L=</span>
<span class="t" style="left:125.7px;top:516.3px;font-size:9.6px;color:#111;letter-spacing:0;transform-origin:0 0;transform:scaleX(0.856);">6.99</span>
<span class="t" style="left:143px;top:516.3px;font-size:9.6px;color:#111;letter-spacing:0;transform-origin:0 0;transform:scaleX(0.833);">A=</span>
<span class="t" style="left:158px;top:516.3px;font-size:9.6px;color:#111;letter-spacing:0;transform-origin:0 0;transform:scaleX(0.833);">90.00</span>
<span class="t" style="left:249.5px;top:516.3px;font-size:9.6px;color:#111;letter-spacing:0;transform-origin:0 0;transform:scaleX(0.814);">RUN Length</span>
<span class="t" style="left:300px;top:516.3px;font-size:9.6px;color:#111;letter-spacing:0;transform-origin:0 0;transform:scaleX(0.790);">2.50 mm</span>
<span class="t" style="left:320px;top:530.3px;font-size:9.6px;color:#111;letter-spacing:0;transform-origin:0 0;transform:scaleX(0.790);">Jump (M)</span>
<div class="" style="left:38px;top:516px;width:1px;height:10px;background:#c9c6b6;"></div>
<div class="" style="left:244px;top:516px;width:1px;height:10px;background:#c9c6b6;"></div>
<div class="" style="left:315px;top:530px;width:1px;height:10px;background:#c9c6b6;"></div>
<div class="" style="left:481px;top:515px;width:294px;height:25px;background:#0831d9;"></div>
<div class="" style="left:481px;top:515.5px;width:294px;height:16px;background:linear-gradient(#2a6cf0,#0a50e0 30%,#0546d4 80%,#0a44c8);"></div>
<div class="" style="left:481px;top:514.5px;width:294px;height:1px;background:#8a93a8;"></div>
<span class="t" style="left:485px;top:519.9px;font-size:9.8px;color:#fff;letter-spacing:0;font-weight:bold;transform-origin:0 0;transform:scaleX(0.879);">Toolbar Park</span>
<div class="" style="left:761px;top:520px;width:9.5px;height:9.5px;background:#d8502c;border:1px solid #fff;border-radius:2px;"></div>
<svg style="left:761px;top:520px" width="9.5" height="9.5" viewBox="0 0 9.5 9.5"><path d="M2.5 2.5 L7 7 M7 2.5 L2.5 7" stroke="#fff" stroke-width="1.5"/></svg>
<div class="" style="left:484px;top:531.5px;width:287px;height:9px;background:#ECE9D8;"></div>
<svg style="left:484px;top:531px" width="288" height="9" viewBox="0 0 288 9" fill="#fff" stroke="#333" stroke-width="1"><path d="M1.5 9 V4.5 H50 L53.5 8 V9"/><path d="M56.5 9 V4.5 H89 L92.5 8 V9"/><path d="M94.5 9 V4.5 H150 L153.5 8 V9"/><path d="M155.5 9 V4.5 H183 L186 8 V9"/><path d="M187.5 9 V4.5 H215 L218 8 V9"/><path d="M220.500 9 V4.5 H276.500 V9"/></svg>
<div class="" style="left:720px;top:510px;width:280px;height:1px;background:#f6f4ea;"></div>
<div class="" style="left:776px;top:511px;width:224px;height:1px;background:#d6d3c3;"></div>
<div class="" style="left:776px;top:513px;width:224px;height:27px;background:#ECE9D8;"></div>
<span class="t" style="left:779.6px;top:514.7px;font-size:9.5px;color:#111;letter-spacing:0;transform-origin:0 0;transform:scaleX(0.824);">X:</span>
<span class="t" style="left:779.6px;top:528.7px;font-size:9.5px;color:#111;letter-spacing:0;transform-origin:0 0;transform:scaleX(0.876);">Y:</span>
<span class="t" style="left:854.6px;top:514.7px;font-size:9.5px;color:#111;letter-spacing:0;transform-origin:0 0;transform:scaleX(0.796);">W:</span>
<span class="t" style="left:857px;top:528.7px;font-size:9.5px;color:#111;letter-spacing:0;transform-origin:0 0;transform:scaleX(0.705);">H:</span>
<span class="t" style="left:829.7px;top:514.7px;font-size:9.5px;color:#111;letter-spacing:0;transform-origin:0 0;transform:scaleX(0.727);">mm</span>
<span class="t" style="left:829.7px;top:528.7px;font-size:9.5px;color:#111;letter-spacing:0;transform-origin:0 0;transform:scaleX(0.727);">mm</span>
<span class="t" style="left:908px;top:514.7px;font-size:9.5px;color:#111;letter-spacing:0;transform-origin:0 0;transform:scaleX(0.727);">mm</span>
<span class="t" style="left:908px;top:528.7px;font-size:9.5px;color:#111;letter-spacing:0;transform-origin:0 0;transform:scaleX(0.727);">mm</span>
<span class="t" style="left:968px;top:514.7px;font-size:9.5px;color:#111;letter-spacing:0;transform-origin:0 0;transform:scaleX(0.829);">%</span>
<span class="t" style="left:968px;top:528.7px;font-size:9.5px;color:#111;letter-spacing:0;transform-origin:0 0;transform:scaleX(0.829);">%</span>
<div class="fld" style="left:790.5px;top:513.5px;width:36.5px;height:13px;"></div>
<span class="t" style="left:794.6px;top:515.3px;font-size:9.8px;color:#111;letter-spacing:0;transform-origin:0 0;transform:scaleX(0.787);">0.00</span>
<div class="fld" style="left:790.5px;top:527.5px;width:36.5px;height:13px;"></div>
<span class="t" style="left:794.6px;top:529.3px;font-size:9.8px;color:#111;letter-spacing:0;transform-origin:0 0;transform:scaleX(0.792);">-10.87</span>
<div class="fld" style="left:868px;top:513.5px;width:37px;height:13px;"></div>
<span class="t" style="left:871.8px;top:515.3px;font-size:9.8px;color:#111;letter-spacing:0;transform-origin:0 0;transform:scaleX(0.839);">0.00</span>
<div class="fld" style="left:868px;top:527.5px;width:37px;height:13px;"></div>
<span class="t" style="left:871.8px;top:529.3px;font-size:9.8px;color:#111;letter-spacing:0;transform-origin:0 0;transform:scaleX(0.834);">831.12</span>
<div class="fld" style="left:927px;top:513.5px;width:37.5px;height:13px;"></div>
<span class="t" style="left:931.8px;top:515.3px;font-size:9.8px;color:#111;letter-spacing:0;transform-origin:0 0;transform:scaleX(0.801);">100.00</span>
<div class="fld" style="left:927px;top:527.5px;width:37.5px;height:13px;"></div>
<span class="t" style="left:931.8px;top:529.3px;font-size:9.8px;color:#111;letter-spacing:0;transform-origin:0 0;transform:scaleX(0.801);">100.00</span>
<div class="" style="left:848px;top:515px;width:2px;height:25px;background:#c8c5b5;border-right:1px solid rgba(255,255,255,.75);"></div>
<div class="" style="left:978.5px;top:515px;width:2px;height:25px;background:#c8c5b5;border-right:1px solid rgba(255,255,255,.75);"></div>
<div class="" style="left:984px;top:514px;width:12px;height:12px;border:1px solid #c9c6b6;border-radius:2px;"></div>
<div class="" style="left:984px;top:528px;width:12px;height:12px;border:1px solid #c9c6b6;border-radius:2px;"></div>
<svg style="left:984px;top:514px" width="12" height="26" viewBox="0 0 12 26" fill="none" stroke="#c5c2b2" stroke-width="1.2"><path d="M3 6.5 L5 9 L9 3"/><path d="M3 17 L9 23.500 M9 17 L3 23.500"/></svg>
</div></body></html>
